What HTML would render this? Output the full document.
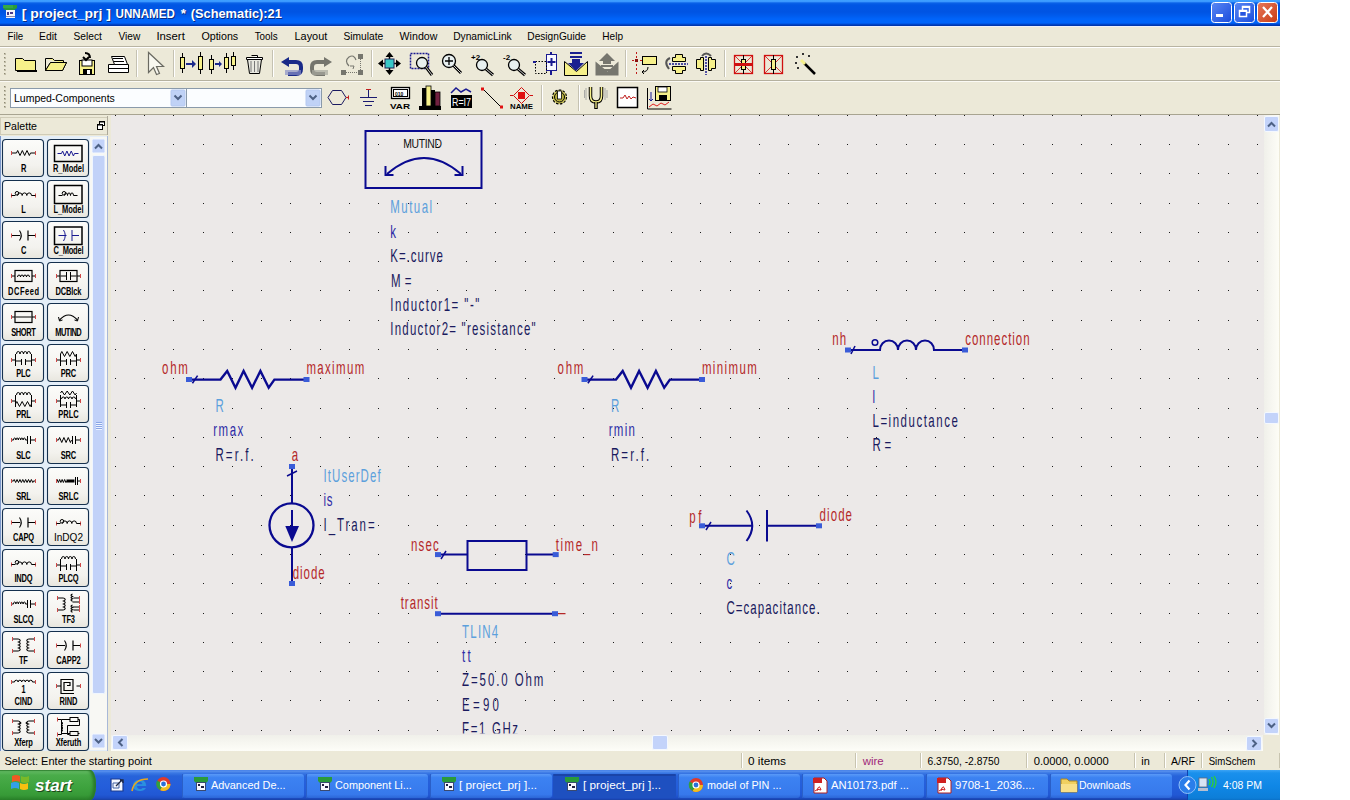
<!DOCTYPE html><html><head><meta charset="utf-8"><title>ADS Schematic</title><style>
html,body{margin:0;padding:0;background:#fff;width:1350px;height:800px;overflow:hidden;font-family:"Liberation Sans",sans-serif;}
.a{position:absolute;}
svg text{font-family:"Liberation Sans",sans-serif;}
</style></head><body>
<div class="a" style="left:0;top:0;width:1280px;height:769px;background:#ECE9D8"></div>
<div class="a" style="left:0;top:0;width:1280px;height:26px;background:linear-gradient(to bottom,#3EA0FF 0px,#3A98FF 1.5px,#0A62E8 3px,#0056E4 5px,#0054E3 12px,#005CEE 16px,#0064FA 19px,#0064FA 23px,#0044C8 24.5px,#0030A0 26px)"></div><div class="a" style="left:0;top:26px;width:1280px;height:1px;background:#EEF0FA"></div>
<div class="a" style="left:0;top:46px;width:1280px;height:1px;background:#B8B4A2"></div>
<div class="a" style="left:0;top:47px;width:1280px;height:1px;background:#FFFFFF"></div>
<div class="a" style="left:0;top:80px;width:1280px;height:1px;background:#B5B19F"></div>
<div class="a" style="left:0;top:81px;width:1280px;height:1px;background:#FBFAF5"></div>
<div class="a" style="left:0;top:114px;width:1280px;height:1px;background:#A8A491"></div>
<div class="a" style="left:111px;top:115px;width:1153px;height:620px;background:#ECE9E8"></div>
<div class="a" style="left:1264px;top:115px;width:15px;height:620px;background:linear-gradient(to right,#F0F0EA,#F8F8F2 60%,#FDFDF6)"></div>
<div class="a" style="left:111px;top:735px;width:1152px;height:16px;background:linear-gradient(to bottom,#F0F0EA,#F8F8F2 60%,#FDFDF8)"></div>
<div class="a" style="left:1264px;top:735px;width:16px;height:16px;background:#ECE9D8"></div>
<div class="a" style="left:0;top:117px;width:106px;height:16px;background:#ECE9D8;border:1px solid #D0CCB8;"></div>
<div class="a" style="left:107px;top:116px;width:1px;height:19px;background:#ACA899"></div>
<div class="a" style="left:0;top:136px;width:108px;height:615px;background:#E4EEF8"></div>
<div class="a" style="left:0;top:136px;width:1px;height:615px;background:#7A96C8"></div>
<div class="a" style="left:107px;top:136px;width:1px;height:615px;background:#A8B8D8"></div>
<div class="a" style="left:0;top:751px;width:1280px;height:19px;background:#ECE9D8"></div>
<div class="a" style="left:0;top:770px;width:1280px;height:30px;background:linear-gradient(to bottom,#3E7AE6 0px,#5A92EE 1px,#3A78E4 3px,#2763DA 6px,#245EDB 16px,#2158D4 25px,#1D4DC4 28px,#1941A5 30px)"></div>
<div class="a" style="left:1187px;top:770px;width:92px;height:30px;background:linear-gradient(to bottom,#3CA4F5 0px,#1A90EC 3px,#0F87E6 16px,#0D7ED8 28px,#0A6BC0 31px);border-left:1px solid #1042AF"></div>
<div class="a" style="left:0;top:770px;width:96px;height:30px;border-radius:0 6px 6px 0 / 0 14px 14px 0;background:linear-gradient(to bottom,#2F7F2F 0px,#62BA62 1.5px,#4AAC4A 5px,#3DA23D 18px,#379A37 25px,#2A822A 30px);box-shadow:inset -3px 0 3px #2A7A2A"></div>

<svg class="a" style="left:0;top:0" width="1350" height="800">
<text x="22.7" y="19" font-size="13" fill="#0A2A80" font-weight="bold" textLength="89.3" lengthAdjust="spacingAndGlyphs" text-anchor="start" style="" >[ project_prj ]</text>
<text x="21.7" y="18" font-size="13" fill="#FFFFFF" font-weight="bold" textLength="89.3" lengthAdjust="spacingAndGlyphs" text-anchor="start" style="" >[ project_prj ]</text>
<text x="116.6" y="19" font-size="13" fill="#0A2A80" font-weight="bold" textLength="59.2" lengthAdjust="spacingAndGlyphs" text-anchor="start" style="" >UNNAMED</text>
<text x="115.6" y="18" font-size="13" fill="#FFFFFF" font-weight="bold" textLength="59.2" lengthAdjust="spacingAndGlyphs" text-anchor="start" style="" >UNNAMED</text>
<text x="181.7" y="19" font-size="13" fill="#0A2A80" font-weight="bold" textLength="5.3" lengthAdjust="spacingAndGlyphs" text-anchor="start" style="" >*</text>
<text x="180.7" y="18" font-size="13" fill="#FFFFFF" font-weight="bold" textLength="5.3" lengthAdjust="spacingAndGlyphs" text-anchor="start" style="" >*</text>
<text x="191.7" y="19" font-size="13" fill="#0A2A80" font-weight="bold" textLength="91.2" lengthAdjust="spacingAndGlyphs" text-anchor="start" style="" >(Schematic):21</text>
<text x="190.7" y="18" font-size="13" fill="#FFFFFF" font-weight="bold" textLength="91.2" lengthAdjust="spacingAndGlyphs" text-anchor="start" style="" >(Schematic):21</text>
<path d="M3 5 h14 v3 l-3 2 h-9 l-2 -2 z" fill="#2A9A3A"/><path d="M4 5 v3 M6 5 v3 M8 5 v3 M10 5 v3 M12 5 v3" stroke="#48C060" stroke-width="0.8"/><rect x="6" y="10" width="9" height="8" fill="#F4F4FA"/><rect x="7" y="12" width="2" height="3" fill="#4A3A8A"/><rect x="10" y="12" width="3" height="2" fill="#4A3A8A"/><rect x="6" y="16" width="9" height="1" fill="#8A8AB0"/>
<defs><linearGradient id="wbmin" x1="0" y1="0" x2="1" y2="1"><stop offset="0" stop-color="#5A88F4"/><stop offset="1" stop-color="#1A4CDC"/></linearGradient></defs>
<rect x="1211.5" y="2.5" width="20" height="20" rx="3" fill="url(#wbmin)" stroke="#FFFFFF" stroke-width="1"/>
<rect x="1216" y="14" width="7" height="3" fill="#fff"/>
<defs><linearGradient id="wbmax" x1="0" y1="0" x2="1" y2="1"><stop offset="0" stop-color="#5A88F4"/><stop offset="1" stop-color="#1A4CDC"/></linearGradient></defs>
<rect x="1234.5" y="2.5" width="20" height="20" rx="3" fill="url(#wbmax)" stroke="#FFFFFF" stroke-width="1"/>
<rect x="1242.5" y="6.5" width="7" height="6" fill="none" stroke="#fff" stroke-width="1.5"/><rect x="1239.5" y="10.5" width="7" height="6" fill="#2454E0" stroke="#fff" stroke-width="1.5"/><rect x="1239" y="10" width="8" height="2" fill="#fff"/><rect x="1242" y="6" width="8" height="2" fill="#fff"/>
<defs><linearGradient id="wbclose" x1="0" y1="0" x2="1" y2="1"><stop offset="0" stop-color="#E8785A"/><stop offset="1" stop-color="#C83C14"/></linearGradient></defs>
<rect x="1257.5" y="2.5" width="20" height="20" rx="3" fill="url(#wbclose)" stroke="#FFFFFF" stroke-width="1"/>
<path d="M1263 7 L1272 17 M1272 7 L1263 17" stroke="#fff" stroke-width="2.2"/>
<text x="7.6" y="40" font-size="11" fill="#000" font-weight="normal" textLength="15.6" lengthAdjust="spacingAndGlyphs" text-anchor="start" style="" >File</text>
<text x="39.1" y="40" font-size="11" fill="#000" font-weight="normal" textLength="17.8" lengthAdjust="spacingAndGlyphs" text-anchor="start" style="" >Edit</text>
<text x="73.5" y="40" font-size="11" fill="#000" font-weight="normal" textLength="28.4" lengthAdjust="spacingAndGlyphs" text-anchor="start" style="" >Select</text>
<text x="118.5" y="40" font-size="11" fill="#000" font-weight="normal" textLength="21.8" lengthAdjust="spacingAndGlyphs" text-anchor="start" style="" >View</text>
<text x="156.4" y="40" font-size="11" fill="#000" font-weight="normal" textLength="28.4" lengthAdjust="spacingAndGlyphs" text-anchor="start" style="" >Insert</text>
<text x="201.4" y="40" font-size="11" fill="#000" font-weight="normal" textLength="36.8" lengthAdjust="spacingAndGlyphs" text-anchor="start" style="" >Options</text>
<text x="254.7" y="40" font-size="11" fill="#000" font-weight="normal" textLength="23" lengthAdjust="spacingAndGlyphs" text-anchor="start" style="" >Tools</text>
<text x="294.5" y="40" font-size="11" fill="#000" font-weight="normal" textLength="32.8" lengthAdjust="spacingAndGlyphs" text-anchor="start" style="" >Layout</text>
<text x="343.4" y="40" font-size="11" fill="#000" font-weight="normal" textLength="39.8" lengthAdjust="spacingAndGlyphs" text-anchor="start" style="" >Simulate</text>
<text x="399.6" y="40" font-size="11" fill="#000" font-weight="normal" textLength="37.8" lengthAdjust="spacingAndGlyphs" text-anchor="start" style="" >Window</text>
<text x="453.2" y="40" font-size="11" fill="#000" font-weight="normal" textLength="58.5" lengthAdjust="spacingAndGlyphs" text-anchor="start" style="" >DynamicLink</text>
<text x="527.3" y="40" font-size="11" fill="#000" font-weight="normal" textLength="58.7" lengthAdjust="spacingAndGlyphs" text-anchor="start" style="" >DesignGuide</text>
<text x="602.3" y="40" font-size="11" fill="#000" font-weight="normal" textLength="20.7" lengthAdjust="spacingAndGlyphs" text-anchor="start" style="" >Help</text>
<rect x="4" y="53" width="2" height="2" fill="#C1BDA8"/><rect x="4" y="53" width="1" height="1" fill="#8C8873"/><rect x="4" y="57" width="2" height="2" fill="#C1BDA8"/><rect x="4" y="57" width="1" height="1" fill="#8C8873"/><rect x="4" y="61" width="2" height="2" fill="#C1BDA8"/><rect x="4" y="61" width="1" height="1" fill="#8C8873"/><rect x="4" y="65" width="2" height="2" fill="#C1BDA8"/><rect x="4" y="65" width="1" height="1" fill="#8C8873"/><rect x="4" y="69" width="2" height="2" fill="#C1BDA8"/><rect x="4" y="69" width="1" height="1" fill="#8C8873"/><rect x="4" y="73" width="2" height="2" fill="#C1BDA8"/><rect x="4" y="73" width="1" height="1" fill="#8C8873"/>
<rect x="4" y="86" width="2" height="2" fill="#C1BDA8"/><rect x="4" y="86" width="1" height="1" fill="#8C8873"/><rect x="4" y="90" width="2" height="2" fill="#C1BDA8"/><rect x="4" y="90" width="1" height="1" fill="#8C8873"/><rect x="4" y="94" width="2" height="2" fill="#C1BDA8"/><rect x="4" y="94" width="1" height="1" fill="#8C8873"/><rect x="4" y="98" width="2" height="2" fill="#C1BDA8"/><rect x="4" y="98" width="1" height="1" fill="#8C8873"/><rect x="4" y="102" width="2" height="2" fill="#C1BDA8"/><rect x="4" y="102" width="1" height="1" fill="#8C8873"/><rect x="4" y="106" width="2" height="2" fill="#C1BDA8"/><rect x="4" y="106" width="1" height="1" fill="#8C8873"/>
<rect x="136" y="50" width="1" height="27" fill="#C5C2B2"/><rect x="137" y="50" width="1" height="27" fill="#FFFFFF"/>
<rect x="173" y="50" width="1" height="27" fill="#C5C2B2"/><rect x="174" y="50" width="1" height="27" fill="#FFFFFF"/>
<rect x="272" y="50" width="1" height="27" fill="#C5C2B2"/><rect x="273" y="50" width="1" height="27" fill="#FFFFFF"/>
<rect x="371" y="50" width="1" height="27" fill="#C5C2B2"/><rect x="372" y="50" width="1" height="27" fill="#FFFFFF"/>
<rect x="625" y="50" width="1" height="27" fill="#C5C2B2"/><rect x="626" y="50" width="1" height="27" fill="#FFFFFF"/>
<rect x="724" y="50" width="1" height="27" fill="#C5C2B2"/><rect x="725" y="50" width="1" height="27" fill="#FFFFFF"/>
<rect x="541" y="85" width="1" height="26" fill="#C5C2B2"/><rect x="542" y="85" width="1" height="26" fill="#FFFFFF"/>
<rect x="578" y="85" width="1" height="26" fill="#C5C2B2"/><rect x="579" y="85" width="1" height="26" fill="#FFFFFF"/>
<path d="M15.5 58.5 h7 l2 2 h11 v10 h-20 z" fill="#F6F08A" stroke="#000"/><rect x="17" y="70" width="20" height="2" fill="#000"/>
<path d="M45.5 58.5 h7 l2 2 h9 v3 M45.5 58.5 v12 h17 l4 -8 h-16 l-5 8" fill="#F6F08A" stroke="#000"/><path d="M50.5 62.5 h16 l-4 8 h-17 z" fill="#F6F08A" stroke="#000"/>
<rect x="79.5" y="60.5" width="15" height="14" fill="#F6F08A" stroke="#000"/><rect x="82" y="60" width="10" height="6" fill="#fff" stroke="#000" stroke-width="1"/><rect x="83" y="69" width="9" height="6" fill="#000"/><rect x="87" y="70" width="3" height="4" fill="#fff"/><path d="M90 58 q0 -5 -5 -5 M83 57 l3 3 l3 -3" stroke="#000" stroke-width="2" fill="none"/>
<path d="M108.5 64.5 h20 v8 h-20 z" fill="#fff" stroke="#000"/><path d="M111.5 56.5 h13 l3 8 h-13 z" fill="#fff" stroke="#000"/><path d="M108.5 68.5 h20" stroke="#000"/><rect x="113" y="58" width="10" height="1" fill="#000"/><rect x="114" y="61" width="10" height="1" fill="#000"/>
<path d="M148.5 52.5 v20 l5 -5 l3 7 l3 -1 l-3 -7 h7 z" fill="#F8F8F0" stroke="#6A6A62" stroke-width="1.2"/>
<path d="M182.5 53 v20" stroke="#000"/><rect x="180.5" y="57.5" width="4" height="11" fill="#F6F08A" stroke="#000"/><path d="M200.5 52 v22" stroke="#000"/><rect x="198.5" y="56.5" width="4" height="13" fill="#F6F08A" stroke="#000"/><path d="M186 63 h6 v-3 l4 4 l-4 4 v-3 h-6 z" fill="#1C2A8C"/>
<path d="M211.5 55 v19" stroke="#000"/><rect x="209.5" y="59.5" width="4" height="10" fill="#F6F08A" stroke="#000"/><path d="M226.5 53 v20" stroke="#000"/><rect x="224.5" y="57.5" width="4" height="11" fill="#F6F08A" stroke="#000"/><path d="M233.5 52 v18" stroke="#000"/><rect x="231.5" y="56.5" width="4" height="9" fill="#F6F08A" stroke="#000"/><path d="M215 63 h4 v-2 l3 3 l-3 3 v-2 h-4 z" fill="#1C2A8C"/>
<path d="M246.5 57.5 h16 v2 h-16 z M251.5 55.5 h6 v2" fill="#fff" stroke="#000"/><path d="M247.5 59.5 l2 14 h10 l2 -14 z" fill="#E8E8E0" stroke="#000"/><path d="M251 61 v11 M254.5 61 v11 M258 61 v11" stroke="#777"/>
<path d="M289 57 l-8 5 l8 5 v-3 h7 q3 0 3 3 v2 q0 3 -3 3 h-8 v4 h8 q7 0 7 -7 v-2 q0 -7 -7 -7 h-7 z" fill="#1A2A88"/><rect x="285" y="70" width="16" height="5" fill="#8A90C8" opacity="0.7"/>
<path d="M324 57 l8 5 l-8 5 v-3 h-7 q-3 0 -3 3 v2 q0 3 3 3 h8 v4 h-8 q-7 0 -7 -7 v-2 q0 -7 7 -7 h7 z" fill="#75756D"/><rect x="312" y="70" width="16" height="5" fill="#A8A8A0" opacity="0.7"/>
<rect x="358" y="54" width="5" height="5" fill="#76766E"/><rect x="341" y="70" width="5" height="5" fill="#76766E"/><rect x="358" y="70" width="5" height="5" fill="#76766E"/><path d="M346 72.5 h12 M360.5 59 v11" stroke="#76766E" stroke-dasharray="1 1"/><path d="M349 66 q-5 -5 0 -9 q5 -3 7 3" stroke="#76766E" fill="none" stroke-width="1.2"/><path d="M350 66 l4 0 l-1 3" stroke="#76766E" fill="none"/>
<path d="M389.5 52 l-4 5 h8 z M389.5 75 l-4 -5 h8 z M378 63.5 l5 -4 v8 z M401 63.5 l-5 -4 v8 z" fill="#000"/><path d="M389.5 56 v15 M382 63.5 h15" stroke="#000" stroke-width="1.5"/><rect x="385" y="59" width="9" height="9" fill="#38C8C8" stroke="#225"/>
<rect x="410.5" y="53.5" width="18" height="15" fill="none" stroke="#1A1A90" stroke-dasharray="2 1" stroke-width="1.5"/><circle cx="422" cy="63" r="5.5" fill="#E8F0F0" stroke="#000" stroke-width="1.3"/><path d="M425.85 66.85 L432 75" stroke="#000" stroke-width="3"/><path d="M425.85 66.85 L432 75" stroke="#D0D0D0" stroke-width="1"/>
<circle cx="449" cy="61" r="6.5" fill="#E8F0F0" stroke="#000" stroke-width="1.3"/><path d="M453.55 65.55 L461 73" stroke="#000" stroke-width="3"/><path d="M453.55 65.55 L461 73" stroke="#D0D0D0" stroke-width="1"/><path d="M449 57 v8 M445 61 h8" stroke="#000" stroke-width="1.3"/>
<circle cx="482" cy="65" r="5.5" fill="#E8F0F0" stroke="#000" stroke-width="1.3"/><path d="M485.85 68.85 L493 75" stroke="#000" stroke-width="3"/><path d="M485.85 68.85 L493 75" stroke="#D0D0D0" stroke-width="1"/><text x="471" y="60" font-size="8" font-weight="bold" fill="#000">+2</text>
<circle cx="514" cy="65" r="5.5" fill="#E8F0F0" stroke="#000" stroke-width="1.3"/><path d="M517.85 68.85 L525 75" stroke="#000" stroke-width="3"/><path d="M517.85 68.85 L525 75" stroke="#D0D0D0" stroke-width="1"/><text x="503" y="60" font-size="8" font-weight="bold" fill="#000">-2</text>
<rect x="546.5" y="54.5" width="10" height="16" fill="#F8F8FF" stroke="#1A1A90"/><path d="M551.5 58 v8 M547.5 62 h8" stroke="#1A1A90" stroke-width="2"/><rect x="535.5" y="61.5" width="11" height="12" fill="none" stroke="#000" stroke-dasharray="1.5 1.5"/><path d="M533 62 h3 M551 52 v2 M551 71 v4" stroke="#1A1A90" stroke-width="2"/>
<path d="M564.5 61.5 l12 10 l11 -10 v14 h-23 z" fill="#F6F08A" stroke="#000"/><path d="M570 52 h12 v2 h-12 z M570 56 h12 v2 h-12 z" fill="#1A2090"/><path d="M572 59 h8 v4 h4 l-8 8 l-8 -8 h4 z" fill="#1A2090"/>
<path d="M595.5 61.5 l12 10 l11 -10 v14 h-23 z" fill="#76766E"/><path d="M599 61 l8 -8 l8 8 h-4 v3 h-8 v-3 z" fill="#76766E"/><path d="M601 65 h12 v2 h-12 z M601 69 h12 v2 h-12 z" fill="#76766E"/>
<rect x="642.5" y="56.5" width="14" height="8" fill="#F6F08A" stroke="#000"/><path d="M636.5 52 v23" stroke="#C01818" stroke-dasharray="2 2"/><path d="M632 60.5 h10" stroke="#C01818" stroke-dasharray="2 2"/><rect x="635" y="59" width="3" height="3" fill="#8A1010"/><path d="M648 67 q0 5 -6 5 l2 -2 M642 72 l2 2" stroke="#000" fill="none"/>
<path d="M675.5 54.5 h7 v3 h3 v4 h-13 v-4 h3 z M675.5 73.5 h7 v-3 h3 v-4 h-13 v4 h3 z" fill="#F6F08A" stroke="#000"/><path d="M669 64 h19" stroke="#1A1A90" stroke-dasharray="2 1" stroke-width="1.5"/><path d="M670 58 q-7 3 -1 11" stroke="#555" stroke-width="2" fill="none"/>
<path d="M696.5 59.5 h4 v-2 h3 v13 h-3 v-2 h-4 z M715.5 59.5 h-4 v-2 h-3 v13 h3 v-2 h4 z" fill="#F6F08A" stroke="#000"/><path d="M706 56 v19" stroke="#1A1A90" stroke-dasharray="2 1" stroke-width="1.5"/><path d="M702 56 q4 -5 9 0" stroke="#555" stroke-width="2" fill="none"/>
<rect x="734.5" y="55.5" width="18" height="18" fill="none" stroke="#D01010" stroke-width="1.3"/><path d="M734 55 L753 74 M753 55 L734 74" stroke="#D01010" stroke-width="0.8"/><path d="M743.5 55 v19" stroke="#000"/><rect x="741.5" y="59.5" width="4" height="10" fill="#F6F08A" stroke="#000"/>
<rect x="734" y="63" width="19" height="3" fill="#D01010"/>
<rect x="764.5" y="55.5" width="18" height="18" fill="none" stroke="#D01010" stroke-width="1.3"/><path d="M764 55 L783 74 M783 55 L764 74" stroke="#D01010" stroke-width="0.8"/><path d="M773.5 55 v19" stroke="#000"/><rect x="771.5" y="59.5" width="4" height="10" fill="#F6F08A" stroke="#000"/>
<path d="M804 63 L815 74" stroke="#000" stroke-width="2.5"/><path d="M801 60 L805 64" stroke="#F6F08A" stroke-width="3"/><path d="M796 57 l1 -1 l1 1 l-1 1 z M802 54 l1 -1 l1 1 l-1 1 z M808 56 l1 -1 l1 1 l-1 1 z M795 63 l1 -1 l1 1 l-1 1 z M797 68 l1 -1 l1 1 l-1 1 z" stroke="#333" fill="none"/>
<rect x="10.5" y="88.5" width="176" height="19" fill="#FBFDFF" stroke="#8A9AAA"/><rect x="171" y="90" width="14" height="16" rx="1" fill="#C0D2F6"/><rect x="171" y="90" width="14" height="16" rx="1" fill="none" stroke="#B4C8F0"/><path d="M174.5 95.5 l3.5 3.5 l3.5 -3.5" stroke="#4D6185" stroke-width="2" fill="none"/><text x="14" y="102" font-size="11" fill="#000" font-weight="normal" textLength="100.8" lengthAdjust="spacingAndGlyphs" text-anchor="start" style="" >Lumped-Components</text>
<rect x="186.5" y="88.5" width="135" height="19" fill="#FBFDFF" stroke="#8A9AAA"/><rect x="306" y="90" width="14" height="16" rx="1" fill="#C0D2F6"/><rect x="306" y="90" width="14" height="16" rx="1" fill="none" stroke="#B4C8F0"/><path d="M309.5 95.5 l3.5 3.5 l3.5 -3.5" stroke="#4D6185" stroke-width="2" fill="none"/>
<path d="M332.5 90.5 h9 l4.5 7 l-4.5 7 h-9 l-4.5 -7 z" fill="none" stroke="#1A1A60" stroke-width="1"/><path d="M346 97.5 h3" stroke="#C02020" stroke-width="1.2"/><path d="M348.5 95.5 v4" stroke="#C02020"/>
<path d="M368.5 89 v8 M360 97.5 h17 M363 101.5 h11 M365 105.5 h7" stroke="#1A1A70" stroke-width="1"/><path d="M366 89.5 h5" stroke="#C02020"/>
<rect x="391.5" y="87.5" width="18" height="11" fill="#fff" stroke="#000" stroke-width="1.3"/><rect x="393.5" y="89.5" width="14" height="7" fill="none" stroke="#000"/><text x="395" y="95.5" font-size="5" font-weight="bold">010</text><text x="390" y="109" font-size="7" font-weight="bold" textLength="20" lengthAdjust="spacingAndGlyphs">VAR</text>
<rect x="419" y="106" width="22" height="4" fill="#000"/><rect x="422" y="88" width="4" height="18" fill="#000"/><rect x="426" y="86" width="5" height="20" fill="#F6F08A" stroke="#000" stroke-width="0.8"/><rect x="431" y="90" width="4" height="16" fill="#000"/><rect x="435" y="92" width="5" height="14" fill="#702040" stroke="#000" stroke-width="0.8"/>
<rect x="451" y="95" width="21" height="13" fill="#000"/><text x="452" y="106" font-size="10" fill="#fff" textLength="19" lengthAdjust="spacingAndGlyphs">R=I7</text><path d="M451 93 l5 -5 l5 4 l5 -3 l5 3" stroke="#1A1A90" stroke-width="1.5" fill="none"/>
<path d="M483.5 89.5 L500.5 106.5" stroke="#000" stroke-width="1"/><rect x="481" y="87.5" width="3" height="3" fill="#E01010"/><rect x="500" y="105.5" width="3" height="3" fill="#E01010"/>
<path d="M521.5 87.5 l8 8 l-8 8 l-8 -8 z" fill="none" stroke="#D01010"/><rect x="518" y="92" width="7" height="7" fill="#E01010"/><path d="M510 95.5 h3 M530 95.5 h3" stroke="#D01010"/><text x="510" y="109" font-size="6.5" font-weight="bold" textLength="23" lengthAdjust="spacingAndGlyphs">NAME</text>
<circle cx="559.5" cy="97" r="7" fill="#D8D060" stroke="#000" stroke-width="1.2" stroke-dasharray="2.5 1.5"/><circle cx="559.5" cy="97" r="5" fill="#B8B040" stroke="#000"/><rect x="557.5" y="91" width="4" height="8" fill="#fff" stroke="#000" stroke-width="0.8"/>
<path d="M590.5 87 v9 q0 6 5.5 6 q5.5 0 5.5 -6 v-9" stroke="#000" stroke-width="3.5" fill="none"/><path d="M590.5 87 v9 q0 6 5.5 6 q5.5 0 5.5 -6 v-9" stroke="#F6F08A" stroke-width="1.5" fill="none"/><path d="M596 102 v7" stroke="#000" stroke-width="3.5"/><path d="M596 102 v6" stroke="#F6F08A" stroke-width="1.3"/><path d="M586 88 v12 M605 88 v12 M584.5 90 v8 M607 90 v8" stroke="#999" stroke-width="0.8"/>
<rect x="617.5" y="87.5" width="20" height="20" fill="#fff" stroke="#000" stroke-width="1.5"/><path d="M620 98 l3 0 l2 -3 l2 4 l2 -3 l2 3 l2 -2 l3 1" stroke="#C02020" fill="none"/>
<rect x="655.5" y="86.5" width="15" height="14" fill="#F6F08A" stroke="#000"/><rect x="658" y="87" width="9" height="5" fill="#fff" stroke="#000" stroke-width="0.8"/><rect x="659" y="95" width="8" height="5" fill="#000"/><path d="M647.5 88 v21 h24" stroke="#000" fill="none"/><path d="M651 92 v9 l-2 -2 M651 101 l2 -2" stroke="#1A1A90" fill="none"/><path d="M649 107 l4 -3 l4 2 l4 -3 l4 2 l4 -3" stroke="#E02020" fill="none"/>
<text x="4" y="130" font-size="11" fill="#000" font-weight="normal" textLength="33" lengthAdjust="spacingAndGlyphs" text-anchor="start" style="" >Palette</text>
<rect x="99.5" y="121.5" width="5" height="4" fill="#fff" stroke="#000"/><rect x="97.5" y="124.5" width="5" height="5" fill="#fff" stroke="#000"/><rect x="100" y="121" width="5" height="1.5" fill="#000"/><rect x="98" y="124" width="5" height="1.5" fill="#000"/>
<rect x="90" y="137" width="17" height="613" fill="#F8F8F4"/>
<rect x="92" y="139" width="13" height="14" rx="1.5" fill="#C3D3FA" stroke="#F4F8FF"/><path d="M95 148.5 l3.5 -3.5 l3.5 3.5" stroke="#4D6185" stroke-width="2" fill="none"/>
<rect x="92.5" y="155.5" width="12.5" height="538" rx="1.5" fill="#C2D2F8" stroke="#F0F6FF"/><path d="M96 422.5 h6 M96 424.5 h6 M96 426.5 h6 M96 428.5 h6" stroke="#8AA6E6"/><path d="M96 423.5 h6 M96 425.5 h6 M96 427.5 h6 M96 429.5 h6" stroke="#EEF4FF"/>
<rect x="92" y="734" width="13" height="14" rx="1.5" fill="#C3D3FA" stroke="#F4F8FF"/><path d="M95 739 l3.5 3.5 l3.5 -3.5" stroke="#4D6185" stroke-width="2" fill="none"/>
<defs><linearGradient id="btng" x1="0" y1="0" x2="0" y2="1"><stop offset="0" stop-color="#FCFCFA"/><stop offset="0.7" stop-color="#F3F2EE"/><stop offset="1" stop-color="#E8E6DE"/></linearGradient></defs>
<rect x="2.5" y="139.5" width="41" height="37" rx="3.5" fill="url(#btng)" stroke="#15304E" stroke-width="1.1"/>
<path d="M11.5 153 h5 M30.5 153 h5" stroke="#000"/><path d="M16.5 153 L17.666666666666668 150.5 L20.0 155.5 L22.333333333333336 150.5 L24.666666666666668 155.5 L27.0 150.5 L29.333333333333336 155.5 L30.5 153" stroke="#000" stroke-width="1" fill="none"/><rect x="11.0" y="151" width="1" height="4" fill="#D04848"/><rect x="35.0" y="151" width="1" height="4" fill="#D04848"/>
<text transform="translate(20.95,172) scale(0.75,1)" x="0" y="0" font-size="10" font-weight="bold" fill="#000" textLength="6.80" lengthAdjust="spacing">R</text>
<rect x="47.5" y="139.5" width="41" height="37" rx="3.5" fill="url(#btng)" stroke="#15304E" stroke-width="1.1"/>
<rect x="54.5" y="145.5" width="27.5" height="16" fill="none" stroke="#000" stroke-width="1.5"/><path d="M57.5 153.5 h4 M74.5 153.5 h4" stroke="#1A1A90"/><path d="M61.5 153.5 L62.583333333333336 151.0 L64.75 156.0 L66.91666666666667 151.0 L69.08333333333333 156.0 L71.25 151.0 L73.41666666666667 156.0 L74.5 153.5" stroke="#1A1A90" stroke-width="1" fill="none"/>
<text transform="translate(53.00,172) scale(0.75,1)" x="0" y="0" font-size="10" font-weight="bold" fill="#000" textLength="41.33" lengthAdjust="spacing">R_Model</text>
<rect x="2.5" y="180.5" width="41" height="37" rx="3.5" fill="url(#btng)" stroke="#15304E" stroke-width="1.1"/>
<rect x="11.0" y="193.5" width="1" height="4" fill="#D04848"/><rect x="35.0" y="193.5" width="1" height="4" fill="#D04848"/><path d="M11.5 195.5 h4 M31.5 195.5 h4" stroke="#000"/><circle cx="17.0" cy="193.3" r="1.8" fill="none" stroke="#000"/><path d="M17.5 195.5 a2.3333333333333335 2.6 0 0 1 4.666666666666667 0 a2.3333333333333335 2.6 0 0 1 4.666666666666667 0 a2.3333333333333335 2.6 0 0 1 4.666666666666667 0" stroke="#000" stroke-width="1" fill="none"/>
<text transform="translate(21.25,213) scale(0.75,1)" x="0" y="0" font-size="10" font-weight="bold" fill="#000" textLength="6.00" lengthAdjust="spacing">L</text>
<rect x="47.5" y="180.5" width="41" height="37" rx="3.5" fill="url(#btng)" stroke="#15304E" stroke-width="1.1"/>
<rect x="54.5" y="185.5" width="27.5" height="18" fill="none" stroke="#000" stroke-width="1.5"/><path d="M58.5 195.5 h4 M73.5 195.5 h4" stroke="#000"/><circle cx="64.0" cy="193.3" r="1.8" fill="none" stroke="#000"/><path d="M64.5 195.5 a1.5 2.6 0 0 1 3.0 0 a1.5 2.6 0 0 1 3.0 0 a1.5 2.6 0 0 1 3.0 0" stroke="#000" stroke-width="1" fill="none"/>
<text transform="translate(53.50,213) scale(0.75,1)" x="0" y="0" font-size="10" font-weight="bold" fill="#000" textLength="40.00" lengthAdjust="spacing">L_Model</text>
<rect x="2.5" y="221.5" width="41" height="37" rx="3.5" fill="url(#btng)" stroke="#15304E" stroke-width="1.1"/>
<path d="M11.5 235.5 h8.5 M28.0 235.5 h8" stroke="#000" stroke-width="1"/><path d="M28.0 230.5 v10" stroke="#000" stroke-width="1.2"/><path d="M19.5 230.5 q3.5 5 0 10" stroke="#000" fill="none" stroke-width="1.1"/><rect x="11.0" y="233.5" width="1" height="4" fill="#D04848"/><rect x="35.0" y="233.5" width="1" height="4" fill="#D04848"/>
<text transform="translate(21.00,254) scale(0.75,1)" x="0" y="0" font-size="10" font-weight="bold" fill="#000" textLength="6.67" lengthAdjust="spacing">C</text>
<rect x="47.5" y="221.5" width="41" height="37" rx="3.5" fill="url(#btng)" stroke="#15304E" stroke-width="1.1"/>
<rect x="54.5" y="227" width="27.5" height="17.5" fill="none" stroke="#000" stroke-width="1.5"/><path d="M58.5 235.5 h8 M72.0 235.5 h7 M72.0 230 v11" stroke="#1A1A90"/><path d="M63.5 230 q3.5 5.5 0 11" stroke="#1A1A90" fill="none"/>
<text transform="translate(53.50,254) scale(0.75,1)" x="0" y="0" font-size="10" font-weight="bold" fill="#000" textLength="40.00" lengthAdjust="spacing">C_Model</text>
<rect x="2.5" y="262.5" width="41" height="37" rx="3.5" fill="url(#btng)" stroke="#15304E" stroke-width="1.1"/>
<rect x="15.0" y="270.5" width="17" height="11" fill="none" stroke="#000" stroke-width="1.2"/><path d="M11.5 276 h3.5 M32.0 276 h3.5" stroke="#000"/><rect x="11.0" y="274" width="1" height="4" fill="#D04848"/><rect x="35.0" y="274" width="1" height="4" fill="#D04848"/><path d="M17.5 277 a1.5 2 0 0 1 3.0 0 a1.5 2 0 0 1 3.0 0 a1.5 2 0 0 1 3.0 0 a1.5 2 0 0 1 3.0 0" stroke="#000" stroke-width="1" fill="none"/>
<text transform="translate(8.00,295) scale(0.75,1)" x="0" y="0" font-size="10" font-weight="bold" fill="#000" textLength="41.33" lengthAdjust="spacing">DCFeed</text>
<rect x="47.5" y="262.5" width="41" height="37" rx="3.5" fill="url(#btng)" stroke="#15304E" stroke-width="1.1"/>
<rect x="60.0" y="270.5" width="17" height="11" fill="none" stroke="#000" stroke-width="1.2"/><path d="M56.5 276 h3.5 M77.0 276 h3.5" stroke="#000"/><rect x="56.0" y="274" width="1" height="4" fill="#D04848"/><rect x="80.0" y="274" width="1" height="4" fill="#D04848"/><path d="M66.5 272 v8 M70.5 272 v8 M60.5 276 h6 M70.5 276 h6" stroke="#000"/>
<text transform="translate(55.50,295) scale(0.75,1)" x="0" y="0" font-size="10" font-weight="bold" fill="#000" textLength="34.67" lengthAdjust="spacing">DCBlck</text>
<rect x="2.5" y="303.5" width="41" height="37" rx="3.5" fill="url(#btng)" stroke="#15304E" stroke-width="1.1"/>
<rect x="15.0" y="311.5" width="17" height="11" fill="none" stroke="#000" stroke-width="1.2"/><path d="M11.5 317 h3.5 M32.0 317 h3.5" stroke="#000"/><rect x="11.0" y="315" width="1" height="4" fill="#D04848"/><rect x="35.0" y="315" width="1" height="4" fill="#D04848"/><path d="M15.5 317 h16" stroke="#000"/>
<text transform="translate(11.25,336) scale(0.75,1)" x="0" y="0" font-size="10" font-weight="bold" fill="#000" textLength="32.67" lengthAdjust="spacing">SHORT</text>
<rect x="47.5" y="303.5" width="41" height="37" rx="3.5" fill="url(#btng)" stroke="#15304E" stroke-width="1.1"/>
<path d="M59.5 320 q9 -10 18 0" stroke="#000" fill="none" stroke-width="1.2"/><path d="M58.5 317 l1 4 l3 -1 M78.5 317 l-1 4 l-3 -1" stroke="#000" fill="none"/>
<text transform="translate(55.20,336) scale(0.75,1)" x="0" y="0" font-size="10" font-weight="bold" fill="#000" textLength="35.47" lengthAdjust="spacing">MUTIND</text>
<rect x="2.5" y="344.5" width="41" height="37" rx="3.5" fill="url(#btng)" stroke="#15304E" stroke-width="1.1"/>
<path d="M11.5 360 h4 M31.5 360 h4 M15.5 354 v12 M31.5 354 v12" stroke="#000"/><rect x="11.0" y="358" width="1" height="4" fill="#D04848"/><rect x="35.0" y="358" width="1" height="4" fill="#D04848"/><path d="M16.5 354 a1.75 2.5 0 0 1 3.5 0 a1.75 2.5 0 0 1 3.5 0 a1.75 2.5 0 0 1 3.5 0 a1.75 2.5 0 0 1 3.5 0" stroke="#000" stroke-width="1" fill="none"/><path d="M15.5 361 h6 M25.5 361 h6 M21.5 359 v6 M25.5 359 v6" stroke="#000"/>
<text transform="translate(16.30,377) scale(0.75,1)" x="0" y="0" font-size="10" font-weight="bold" fill="#000" textLength="19.20" lengthAdjust="spacing">PLC</text>
<rect x="47.5" y="344.5" width="41" height="37" rx="3.5" fill="url(#btng)" stroke="#15304E" stroke-width="1.1"/>
<path d="M56.5 360 h4 M76.5 360 h4 M60.5 354 v12 M76.5 354 v12" stroke="#000"/><rect x="56.0" y="358" width="1" height="4" fill="#D04848"/><rect x="80.0" y="358" width="1" height="4" fill="#D04848"/><path d="M60.5 354 L61.833333333333336 351.5 L64.5 356.5 L67.16666666666667 351.5 L69.83333333333333 356.5 L72.5 351.5 L75.16666666666667 356.5 L76.5 354" stroke="#000" stroke-width="1" fill="none"/><path d="M60.5 361 h6 M70.5 361 h6 M66.5 359 v6 M70.5 359 v6" stroke="#000"/>
<text transform="translate(60.80,377) scale(0.75,1)" x="0" y="0" font-size="10" font-weight="bold" fill="#000" textLength="20.52" lengthAdjust="spacing">PRC</text>
<rect x="2.5" y="385.5" width="41" height="37" rx="3.5" fill="url(#btng)" stroke="#15304E" stroke-width="1.1"/>
<path d="M11.5 401 h4 M31.5 401 h4 M15.5 395 v12 M31.5 395 v12" stroke="#000"/><rect x="11.0" y="399" width="1" height="4" fill="#D04848"/><rect x="35.0" y="399" width="1" height="4" fill="#D04848"/><path d="M16.5 395 a1.75 2.5 0 0 1 3.5 0 a1.75 2.5 0 0 1 3.5 0 a1.75 2.5 0 0 1 3.5 0 a1.75 2.5 0 0 1 3.5 0" stroke="#000" stroke-width="1" fill="none"/><path d="M15.5 404 L16.833333333333332 401.5 L19.5 406.5 L22.166666666666664 401.5 L24.833333333333332 406.5 L27.5 401.5 L30.166666666666664 406.5 L31.5 404" stroke="#000" stroke-width="1" fill="none"/>
<text transform="translate(16.21,418) scale(0.75,1)" x="0" y="0" font-size="10" font-weight="bold" fill="#000" textLength="19.44" lengthAdjust="spacing">PRL</text>
<rect x="47.5" y="385.5" width="41" height="37" rx="3.5" fill="url(#btng)" stroke="#15304E" stroke-width="1.1"/>
<path d="M56.5 401 h4 M76.5 401 h4 M60.5 395 v12 M76.5 395 v12" stroke="#000"/><rect x="56.0" y="399" width="1" height="4" fill="#D04848"/><rect x="80.0" y="399" width="1" height="4" fill="#D04848"/><path d="M60.5 393 L61.833333333333336 391 L64.5 395 L67.16666666666667 391 L69.83333333333333 395 L72.5 391 L75.16666666666667 395 L76.5 393" stroke="#000" stroke-width="1" fill="none"/><path d="M61.5 399 a1.75 2 0 0 1 3.5 0 a1.75 2 0 0 1 3.5 0 a1.75 2 0 0 1 3.5 0 a1.75 2 0 0 1 3.5 0" stroke="#000" stroke-width="1" fill="none"/><path d="M60.5 405 h6 M70.5 405 h6 M66.5 402 v6 M70.5 402 v6" stroke="#000"/>
<text transform="translate(58.25,418) scale(0.75,1)" x="0" y="0" font-size="10" font-weight="bold" fill="#000" textLength="27.33" lengthAdjust="spacing">PRLC</text>
<rect x="2.5" y="426.5" width="41" height="37" rx="3.5" fill="url(#btng)" stroke="#15304E" stroke-width="1.1"/>
<path d="M11.5 440 h2" stroke="#000"/><path d="M13.5 440 a1.2 2 0 0 1 2.4 0 a1.2 2 0 0 1 2.4 0 a1.2 2 0 0 1 2.4 0 a1.2 2 0 0 1 2.4 0 a1.2 2 0 0 1 2.4 0" stroke="#000" stroke-width="1" fill="none"/><path d="M25.5 440 h2 M27.5 436 v8 M30.5 436 v8 M30.5 440 h5" stroke="#000"/><rect x="11.0" y="438" width="1" height="4" fill="#D04848"/><rect x="35.0" y="438" width="1" height="4" fill="#D04848"/>
<text transform="translate(16.21,459) scale(0.75,1)" x="0" y="0" font-size="10" font-weight="bold" fill="#000" textLength="19.44" lengthAdjust="spacing">SLC</text>
<rect x="47.5" y="426.5" width="41" height="37" rx="3.5" fill="url(#btng)" stroke="#15304E" stroke-width="1.1"/>
<path d="M56.5 440 h2" stroke="#000"/><path d="M58.5 440 L59.583333333333336 437.5 L61.75 442.5 L63.916666666666664 437.5 L66.08333333333333 442.5 L68.25 437.5 L70.41666666666667 442.5 L71.5 440" stroke="#000" stroke-width="1" fill="none"/><path d="M72.5 436 v8 M75.5 436 v8 M75.5 440 h5" stroke="#000"/><rect x="56.0" y="438" width="1" height="4" fill="#D04848"/><rect x="80.0" y="438" width="1" height="4" fill="#D04848"/>
<text transform="translate(60.80,459) scale(0.75,1)" x="0" y="0" font-size="10" font-weight="bold" fill="#000" textLength="20.52" lengthAdjust="spacing">SRC</text>
<rect x="2.5" y="467.5" width="41" height="37" rx="3.5" fill="url(#btng)" stroke="#15304E" stroke-width="1.1"/>
<path d="M11.5 481 h2 M33.5 481 h2" stroke="#000"/><path d="M13.5 481 L14.214285714285714 479.5 L15.642857142857142 482.5 L17.071428571428573 479.5 L18.5 482.5 L19.92857142857143 479.5 L21.357142857142858 482.5 L22.785714285714285 479.5 L24.214285714285715 482.5 L25.642857142857142 479.5 L27.07142857142857 482.5 L28.5 479.5 L29.92857142857143 482.5 L31.357142857142858 479.5 L32.785714285714285 482.5 L33.5 481" stroke="#000" stroke-width="1" fill="none"/><rect x="11.0" y="479" width="1" height="4" fill="#D04848"/><rect x="35.0" y="479" width="1" height="4" fill="#D04848"/>
<text transform="translate(16.21,500) scale(0.75,1)" x="0" y="0" font-size="10" font-weight="bold" fill="#000" textLength="19.44" lengthAdjust="spacing">SRL</text>
<rect x="47.5" y="467.5" width="41" height="37" rx="3.5" fill="url(#btng)" stroke="#15304E" stroke-width="1.1"/>
<path d="M56.5 481 L57.125 479.5 L58.375 482.5 L59.625 479.5 L60.875 482.5 L62.125 479.5 L63.375 482.5 L64.625 479.5 L65.875 482.5 L66.5 481" stroke="#000" stroke-width="1" fill="none"/><rect x="66.5" y="479.5" width="8" height="3" fill="#000"/><path d="M75.5 477 v8 M77.5 477 v8 M77.5 481 h3" stroke="#000"/><rect x="56.0" y="479" width="1" height="4" fill="#D04848"/><rect x="80.0" y="479" width="1" height="4" fill="#D04848"/>
<text transform="translate(58.40,500) scale(0.75,1)" x="0" y="0" font-size="10" font-weight="bold" fill="#000" textLength="26.93" lengthAdjust="spacing">SRLC</text>
<rect x="2.5" y="508.5" width="41" height="37" rx="3.5" fill="url(#btng)" stroke="#15304E" stroke-width="1.1"/>
<path d="M11.5 522.5 h8.5 M28.0 522.5 h8" stroke="#000" stroke-width="1"/><path d="M28.0 517.5 v10" stroke="#000" stroke-width="1.2"/><path d="M19.5 517.5 q3.5 5 0 10" stroke="#000" fill="none" stroke-width="1.1"/><rect x="11.0" y="520.5" width="1" height="4" fill="#D04848"/><rect x="35.0" y="520.5" width="1" height="4" fill="#D04848"/>
<text transform="translate(13.00,541) scale(0.75,1)" x="0" y="0" font-size="10" font-weight="bold" fill="#000" textLength="28.00" lengthAdjust="spacing">CAPQ</text>
<rect x="47.5" y="508.5" width="41" height="37" rx="3.5" fill="url(#btng)" stroke="#15304E" stroke-width="1.1"/>
<rect x="56.0" y="521.5" width="1" height="4" fill="#D04848"/><rect x="80.0" y="521.5" width="1" height="4" fill="#D04848"/><path d="M56.5 523.5 h4 M76.5 523.5 h4" stroke="#000"/><circle cx="62.0" cy="521.3" r="1.8" fill="none" stroke="#000"/><path d="M62.5 523.5 a2.3333333333333335 2.6 0 0 1 4.666666666666667 0 a2.3333333333333335 2.6 0 0 1 4.666666666666667 0 a2.3333333333333335 2.6 0 0 1 4.666666666666667 0" stroke="#000" stroke-width="1" fill="none"/>
<text x="68.5" y="541" font-size="11" fill="#000" font-weight="normal" textLength="29" lengthAdjust="spacingAndGlyphs" text-anchor="middle" style="" >InDQ2</text>
<rect x="2.5" y="549.5" width="41" height="37" rx="3.5" fill="url(#btng)" stroke="#15304E" stroke-width="1.1"/>
<rect x="11.0" y="562.5" width="1" height="4" fill="#D04848"/><rect x="35.0" y="562.5" width="1" height="4" fill="#D04848"/><path d="M11.5 564.5 h4 M31.5 564.5 h4" stroke="#000"/><circle cx="17.0" cy="562.3" r="1.8" fill="none" stroke="#000"/><path d="M17.5 564.5 a2.3333333333333335 2.6 0 0 1 4.666666666666667 0 a2.3333333333333335 2.6 0 0 1 4.666666666666667 0 a2.3333333333333335 2.6 0 0 1 4.666666666666667 0" stroke="#000" stroke-width="1" fill="none"/>
<text transform="translate(14.39,582) scale(0.75,1)" x="0" y="0" font-size="10" font-weight="bold" fill="#000" textLength="24.30" lengthAdjust="spacing">INDQ</text>
<rect x="47.5" y="549.5" width="41" height="37" rx="3.5" fill="url(#btng)" stroke="#15304E" stroke-width="1.1"/>
<path d="M56.5 565 h4 M76.5 565 h4 M60.5 559 v12 M76.5 559 v12" stroke="#000"/><rect x="56.0" y="563" width="1" height="4" fill="#D04848"/><rect x="80.0" y="563" width="1" height="4" fill="#D04848"/><path d="M61.5 559 a1.75 2.5 0 0 1 3.5 0 a1.75 2.5 0 0 1 3.5 0 a1.75 2.5 0 0 1 3.5 0 a1.75 2.5 0 0 1 3.5 0" stroke="#000" stroke-width="1" fill="none"/><path d="M60.5 566 h6 M70.5 566 h6 M66.5 564 v6 M70.5 564 v6" stroke="#000"/>
<text transform="translate(58.38,582) scale(0.75,1)" x="0" y="0" font-size="10" font-weight="bold" fill="#000" textLength="27.00" lengthAdjust="spacing">PLCQ</text>
<rect x="2.5" y="590.5" width="41" height="37" rx="3.5" fill="url(#btng)" stroke="#15304E" stroke-width="1.1"/>
<path d="M11.5 604 h2" stroke="#000"/><path d="M13.5 604 a1.2 2 0 0 1 2.4 0 a1.2 2 0 0 1 2.4 0 a1.2 2 0 0 1 2.4 0 a1.2 2 0 0 1 2.4 0 a1.2 2 0 0 1 2.4 0" stroke="#000" stroke-width="1" fill="none"/><path d="M25.5 604 h2 M27.5 600 v8 M30.5 600 v8 M30.5 604 h5" stroke="#000"/><rect x="11.0" y="602" width="1" height="4" fill="#D04848"/><rect x="35.0" y="602" width="1" height="4" fill="#D04848"/>
<text transform="translate(13.38,623) scale(0.75,1)" x="0" y="0" font-size="10" font-weight="bold" fill="#000" textLength="27.00" lengthAdjust="spacing">SLCQ</text>
<rect x="47.5" y="590.5" width="41" height="37" rx="3.5" fill="url(#btng)" stroke="#15304E" stroke-width="1.1"/>
<path d="M57.5 598 h6 M57.5 610 h6 M73.5 598 h6 M73.5 610 h6" stroke="#000"/><path d="M63.5 598 q3.5 1.5 0 3 q3.5 1.5 0 3 q3.5 1.5 0 3 q3.5 1.5 0 3" stroke="#000" fill="none" stroke-width="1.1"/><path d="M72.5 594 q-3 1.2 0 2.4 q-3 1.2 0 2.4 q-3 1.2 0 2.4 M72.5 605 q-3 1.2 0 2.4 q-3 1.2 0 2.4 q-3 1.2 0 2.4" stroke="#000" fill="none" stroke-width="1.1"/><path d="M72.5 602 h7 M72.5 607 h7" stroke="#000"/><rect x="79.0" y="600" width="1" height="4" fill="#D04848"/><rect x="79.0" y="605" width="1" height="4" fill="#D04848"/><rect x="57.0" y="596" width="1" height="4" fill="#D04848"/><rect x="57.0" y="608" width="1" height="4" fill="#D04848"/><rect x="79.0" y="596" width="1" height="4" fill="#D04848"/><rect x="79.0" y="608" width="1" height="4" fill="#D04848"/>
<text transform="translate(62.02,623) scale(0.75,1)" x="0" y="0" font-size="10" font-weight="bold" fill="#000" textLength="17.28" lengthAdjust="spacing">TF3</text>
<rect x="2.5" y="631.5" width="41" height="37" rx="3.5" fill="url(#btng)" stroke="#15304E" stroke-width="1.1"/>
<path d="M12.5 639 h6 M12.5 651 h6 M28.5 639 h6 M28.5 651 h6" stroke="#000"/><path d="M18.5 639 q3.5 1.5 0 3 q3.5 1.5 0 3 q3.5 1.5 0 3 q3.5 1.5 0 3" stroke="#000" fill="none" stroke-width="1.1"/><path d="M28.5 639 q-3.5 1.5 0 3 q-3.5 1.5 0 3 q-3.5 1.5 0 3 q-3.5 1.5 0 3" stroke="#000" fill="none" stroke-width="1.1"/><rect x="12.0" y="637" width="1" height="4" fill="#D04848"/><rect x="12.0" y="649" width="1" height="4" fill="#D04848"/><rect x="34.0" y="637" width="1" height="4" fill="#D04848"/><rect x="34.0" y="649" width="1" height="4" fill="#D04848"/>
<text transform="translate(19.05,664) scale(0.75,1)" x="0" y="0" font-size="10" font-weight="bold" fill="#000" textLength="11.88" lengthAdjust="spacing">TF</text>
<rect x="47.5" y="631.5" width="41" height="37" rx="3.5" fill="url(#btng)" stroke="#15304E" stroke-width="1.1"/>
<path d="M56.5 645.5 h8.5 M73.0 645.5 h8" stroke="#000" stroke-width="1"/><path d="M73.0 640.5 v10" stroke="#000" stroke-width="1.2"/><path d="M64.5 640.5 q3.5 5 0 10" stroke="#000" fill="none" stroke-width="1.1"/><rect x="56.0" y="643.5" width="1" height="4" fill="#D04848"/><rect x="80.0" y="643.5" width="1" height="4" fill="#D04848"/>
<text transform="translate(56.35,664) scale(0.75,1)" x="0" y="0" font-size="10" font-weight="bold" fill="#000" textLength="32.40" lengthAdjust="spacing">CAPP2</text>
<rect x="2.5" y="672.5" width="41" height="37" rx="3.5" fill="url(#btng)" stroke="#15304E" stroke-width="1.1"/>
<path d="M14.5 682 a1.8 1.8 0 0 1 3.6 0 a1.8 1.8 0 0 1 3.6 0 a1.8 1.8 0 0 1 3.6 0 a1.8 1.8 0 0 1 3.6 0 a1.8 1.8 0 0 1 3.6 0" stroke="#000" stroke-width="1" fill="none"/><path d="M11.5 682 h3 M32.5 682 h3" stroke="#000"/><text x="23.5" y="693" font-size="10" text-anchor="middle" font-weight="bold" textLength="4" lengthAdjust="spacingAndGlyphs">1</text><rect x="11.0" y="680" width="1" height="4" fill="#D04848"/><rect x="35.0" y="680" width="1" height="4" fill="#D04848"/>
<text transform="translate(14.59,705) scale(0.75,1)" x="0" y="0" font-size="10" font-weight="bold" fill="#000" textLength="23.76" lengthAdjust="spacing">CIND</text>
<rect x="47.5" y="672.5" width="41" height="37" rx="3.5" fill="url(#btng)" stroke="#15304E" stroke-width="1.1"/>
<path d="M67.0 685.5 h3 v-3 h-6 v8 h9 v-11 h-12 v14 h13" fill="none" stroke="#000" stroke-width="1.2"/><path d="M56.5 686 h4.5 M76.5 686 h4" stroke="#000"/><rect x="56.0" y="684" width="1" height="4" fill="#D04848"/><rect x="80.0" y="684" width="1" height="4" fill="#D04848"/>
<text transform="translate(59.59,705) scale(0.75,1)" x="0" y="0" font-size="10" font-weight="bold" fill="#000" textLength="23.76" lengthAdjust="spacing">RIND</text>
<rect x="2.5" y="713.5" width="41" height="37" rx="3.5" fill="url(#btng)" stroke="#15304E" stroke-width="1.1"/>
<path d="M12.5 721 h6 M12.5 733 h6 M28.5 721 h6 M28.5 733 h6" stroke="#000"/><path d="M18.5 721 q3.5 1.5 0 3 q3.5 1.5 0 3 q3.5 1.5 0 3 q3.5 1.5 0 3" stroke="#000" fill="none" stroke-width="1.1"/><path d="M28.5 721 q-3.5 1.5 0 3 q-3.5 1.5 0 3 q-3.5 1.5 0 3 q-3.5 1.5 0 3" stroke="#000" fill="none" stroke-width="1.1"/><circle cx="20.5" cy="723" r="0.9" fill="#000"/><circle cx="26.5" cy="723" r="0.9" fill="#000"/><rect x="12.0" y="719" width="1" height="4" fill="#D04848"/><rect x="12.0" y="731" width="1" height="4" fill="#D04848"/><rect x="34.0" y="719" width="1" height="4" fill="#D04848"/><rect x="34.0" y="731" width="1" height="4" fill="#D04848"/>
<text transform="translate(14.18,746) scale(0.75,1)" x="0" y="0" font-size="10" font-weight="bold" fill="#000" textLength="24.84" lengthAdjust="spacing">Xferp</text>
<rect x="47.5" y="713.5" width="41" height="37" rx="3.5" fill="url(#btng)" stroke="#15304E" stroke-width="1.1"/>
<rect x="70.0" y="717.5" width="8" height="4" fill="none" stroke="#000"/><rect x="70.0" y="731.5" width="8" height="4" fill="none" stroke="#000"/><path d="M57.5 719.5 h4 v15 h-4 M61.5 719.5 h8.5 M78.0 719.5 h1.5 v6 h-12 v9 h2 M61.5 733.5 h8.5 M78.0 733.5 h1.5" stroke="#000" fill="none"/><path d="M61.5 722 q3 1.2 0 2.4 q3 1.2 0 2.4 q3 1.2 0 2.4 q3 1.2 0 2.4" stroke="#000" fill="none"/><rect x="57.0" y="717.5" width="1" height="4" fill="#D04848"/><rect x="57.0" y="732.5" width="1" height="4" fill="#D04848"/>
<text transform="translate(55.74,746) scale(0.75,1)" x="0" y="0" font-size="10" font-weight="bold" fill="#000" textLength="34.02" lengthAdjust="spacing">Xferuth</text>
<rect x="1264.5" y="116.5" width="14" height="15" rx="1.5" fill="#C3D3FA" stroke="#F4F8FF"/><path d="M1268 126.5 l3.5 -3.5 l3.5 3.5" stroke="#4D6185" stroke-width="2" fill="none"/>
<rect x="1264.5" y="718.5" width="14" height="15" rx="1.5" fill="#C3D3FA" stroke="#F4F8FF"/><path d="M1268 723.5 l3.5 3.5 l3.5 -3.5" stroke="#4D6185" stroke-width="2" fill="none"/>
<rect x="1264.5" y="412.5" width="14" height="11" rx="1.5" fill="#C3D3FA" stroke="#F4F8FF"/>
<rect x="112.5" y="735.5" width="15" height="14" rx="1.5" fill="#C3D3FA" stroke="#F4F8FF"/><path d="M122.5 739 l-3.5 3.5 l3.5 3.5" stroke="#4D6185" stroke-width="2" fill="none"/>
<rect x="1246.5" y="736.5" width="15" height="14" rx="1.5" fill="#C3D3FA" stroke="#F4F8FF"/><path d="M1252.5 740 l3.5 3.5 l-3.5 3.5" stroke="#4D6185" stroke-width="2" fill="none"/>
<rect x="652.5" y="735.5" width="15" height="14" rx="1.5" fill="#C3D3FA" stroke="#F4F8FF"/>
<path d="M115 115h1v1h-1zM115 144h1v1h-1zM115 173h1v1h-1zM115 203h1v1h-1zM115 232h1v1h-1zM115 261h1v1h-1zM115 290h1v1h-1zM115 320h1v1h-1zM115 349h1v1h-1zM115 378h1v1h-1zM115 408h1v1h-1zM115 437h1v1h-1zM115 466h1v1h-1zM115 495h1v1h-1zM115 525h1v1h-1zM115 554h1v1h-1zM115 583h1v1h-1zM115 613h1v1h-1zM115 642h1v1h-1zM115 671h1v1h-1zM115 700h1v1h-1zM115 730h1v1h-1zM144 115h1v1h-1zM144 144h1v1h-1zM144 173h1v1h-1zM144 203h1v1h-1zM144 232h1v1h-1zM144 261h1v1h-1zM144 290h1v1h-1zM144 320h1v1h-1zM144 349h1v1h-1zM144 378h1v1h-1zM144 408h1v1h-1zM144 437h1v1h-1zM144 466h1v1h-1zM144 495h1v1h-1zM144 525h1v1h-1zM144 554h1v1h-1zM144 583h1v1h-1zM144 613h1v1h-1zM144 642h1v1h-1zM144 671h1v1h-1zM144 700h1v1h-1zM144 730h1v1h-1zM173 115h1v1h-1zM173 144h1v1h-1zM173 173h1v1h-1zM173 203h1v1h-1zM173 232h1v1h-1zM173 261h1v1h-1zM173 290h1v1h-1zM173 320h1v1h-1zM173 349h1v1h-1zM173 378h1v1h-1zM173 408h1v1h-1zM173 437h1v1h-1zM173 466h1v1h-1zM173 495h1v1h-1zM173 525h1v1h-1zM173 554h1v1h-1zM173 583h1v1h-1zM173 613h1v1h-1zM173 642h1v1h-1zM173 671h1v1h-1zM173 700h1v1h-1zM173 730h1v1h-1zM203 115h1v1h-1zM203 144h1v1h-1zM203 173h1v1h-1zM203 203h1v1h-1zM203 232h1v1h-1zM203 261h1v1h-1zM203 290h1v1h-1zM203 320h1v1h-1zM203 349h1v1h-1zM203 378h1v1h-1zM203 408h1v1h-1zM203 437h1v1h-1zM203 466h1v1h-1zM203 495h1v1h-1zM203 525h1v1h-1zM203 554h1v1h-1zM203 583h1v1h-1zM203 613h1v1h-1zM203 642h1v1h-1zM203 671h1v1h-1zM203 700h1v1h-1zM203 730h1v1h-1zM232 115h1v1h-1zM232 144h1v1h-1zM232 173h1v1h-1zM232 203h1v1h-1zM232 232h1v1h-1zM232 261h1v1h-1zM232 290h1v1h-1zM232 320h1v1h-1zM232 349h1v1h-1zM232 378h1v1h-1zM232 408h1v1h-1zM232 437h1v1h-1zM232 466h1v1h-1zM232 495h1v1h-1zM232 525h1v1h-1zM232 554h1v1h-1zM232 583h1v1h-1zM232 613h1v1h-1zM232 642h1v1h-1zM232 671h1v1h-1zM232 700h1v1h-1zM232 730h1v1h-1zM261 115h1v1h-1zM261 144h1v1h-1zM261 173h1v1h-1zM261 203h1v1h-1zM261 232h1v1h-1zM261 261h1v1h-1zM261 290h1v1h-1zM261 320h1v1h-1zM261 349h1v1h-1zM261 378h1v1h-1zM261 408h1v1h-1zM261 437h1v1h-1zM261 466h1v1h-1zM261 495h1v1h-1zM261 525h1v1h-1zM261 554h1v1h-1zM261 583h1v1h-1zM261 613h1v1h-1zM261 642h1v1h-1zM261 671h1v1h-1zM261 700h1v1h-1zM261 730h1v1h-1zM290 115h1v1h-1zM290 144h1v1h-1zM290 173h1v1h-1zM290 203h1v1h-1zM290 232h1v1h-1zM290 261h1v1h-1zM290 290h1v1h-1zM290 320h1v1h-1zM290 349h1v1h-1zM290 378h1v1h-1zM290 408h1v1h-1zM290 437h1v1h-1zM290 466h1v1h-1zM290 495h1v1h-1zM290 525h1v1h-1zM290 554h1v1h-1zM290 583h1v1h-1zM290 613h1v1h-1zM290 642h1v1h-1zM290 671h1v1h-1zM290 700h1v1h-1zM290 730h1v1h-1zM320 115h1v1h-1zM320 144h1v1h-1zM320 173h1v1h-1zM320 203h1v1h-1zM320 232h1v1h-1zM320 261h1v1h-1zM320 290h1v1h-1zM320 320h1v1h-1zM320 349h1v1h-1zM320 378h1v1h-1zM320 408h1v1h-1zM320 437h1v1h-1zM320 466h1v1h-1zM320 495h1v1h-1zM320 525h1v1h-1zM320 554h1v1h-1zM320 583h1v1h-1zM320 613h1v1h-1zM320 642h1v1h-1zM320 671h1v1h-1zM320 700h1v1h-1zM320 730h1v1h-1zM349 115h1v1h-1zM349 144h1v1h-1zM349 173h1v1h-1zM349 203h1v1h-1zM349 232h1v1h-1zM349 261h1v1h-1zM349 290h1v1h-1zM349 320h1v1h-1zM349 349h1v1h-1zM349 378h1v1h-1zM349 408h1v1h-1zM349 437h1v1h-1zM349 466h1v1h-1zM349 495h1v1h-1zM349 525h1v1h-1zM349 554h1v1h-1zM349 583h1v1h-1zM349 613h1v1h-1zM349 642h1v1h-1zM349 671h1v1h-1zM349 700h1v1h-1zM349 730h1v1h-1zM378 115h1v1h-1zM378 144h1v1h-1zM378 173h1v1h-1zM378 203h1v1h-1zM378 232h1v1h-1zM378 261h1v1h-1zM378 290h1v1h-1zM378 320h1v1h-1zM378 349h1v1h-1zM378 378h1v1h-1zM378 408h1v1h-1zM378 437h1v1h-1zM378 466h1v1h-1zM378 495h1v1h-1zM378 525h1v1h-1zM378 554h1v1h-1zM378 583h1v1h-1zM378 613h1v1h-1zM378 642h1v1h-1zM378 671h1v1h-1zM378 700h1v1h-1zM378 730h1v1h-1zM408 115h1v1h-1zM408 144h1v1h-1zM408 173h1v1h-1zM408 203h1v1h-1zM408 232h1v1h-1zM408 261h1v1h-1zM408 290h1v1h-1zM408 320h1v1h-1zM408 349h1v1h-1zM408 378h1v1h-1zM408 408h1v1h-1zM408 437h1v1h-1zM408 466h1v1h-1zM408 495h1v1h-1zM408 525h1v1h-1zM408 554h1v1h-1zM408 583h1v1h-1zM408 613h1v1h-1zM408 642h1v1h-1zM408 671h1v1h-1zM408 700h1v1h-1zM408 730h1v1h-1zM437 115h1v1h-1zM437 144h1v1h-1zM437 173h1v1h-1zM437 203h1v1h-1zM437 232h1v1h-1zM437 261h1v1h-1zM437 290h1v1h-1zM437 320h1v1h-1zM437 349h1v1h-1zM437 378h1v1h-1zM437 408h1v1h-1zM437 437h1v1h-1zM437 466h1v1h-1zM437 495h1v1h-1zM437 525h1v1h-1zM437 554h1v1h-1zM437 583h1v1h-1zM437 613h1v1h-1zM437 642h1v1h-1zM437 671h1v1h-1zM437 700h1v1h-1zM437 730h1v1h-1zM466 115h1v1h-1zM466 144h1v1h-1zM466 173h1v1h-1zM466 203h1v1h-1zM466 232h1v1h-1zM466 261h1v1h-1zM466 290h1v1h-1zM466 320h1v1h-1zM466 349h1v1h-1zM466 378h1v1h-1zM466 408h1v1h-1zM466 437h1v1h-1zM466 466h1v1h-1zM466 495h1v1h-1zM466 525h1v1h-1zM466 554h1v1h-1zM466 583h1v1h-1zM466 613h1v1h-1zM466 642h1v1h-1zM466 671h1v1h-1zM466 700h1v1h-1zM466 730h1v1h-1zM495 115h1v1h-1zM495 144h1v1h-1zM495 173h1v1h-1zM495 203h1v1h-1zM495 232h1v1h-1zM495 261h1v1h-1zM495 290h1v1h-1zM495 320h1v1h-1zM495 349h1v1h-1zM495 378h1v1h-1zM495 408h1v1h-1zM495 437h1v1h-1zM495 466h1v1h-1zM495 495h1v1h-1zM495 525h1v1h-1zM495 554h1v1h-1zM495 583h1v1h-1zM495 613h1v1h-1zM495 642h1v1h-1zM495 671h1v1h-1zM495 700h1v1h-1zM495 730h1v1h-1zM525 115h1v1h-1zM525 144h1v1h-1zM525 173h1v1h-1zM525 203h1v1h-1zM525 232h1v1h-1zM525 261h1v1h-1zM525 290h1v1h-1zM525 320h1v1h-1zM525 349h1v1h-1zM525 378h1v1h-1zM525 408h1v1h-1zM525 437h1v1h-1zM525 466h1v1h-1zM525 495h1v1h-1zM525 525h1v1h-1zM525 554h1v1h-1zM525 583h1v1h-1zM525 613h1v1h-1zM525 642h1v1h-1zM525 671h1v1h-1zM525 700h1v1h-1zM525 730h1v1h-1zM554 115h1v1h-1zM554 144h1v1h-1zM554 173h1v1h-1zM554 203h1v1h-1zM554 232h1v1h-1zM554 261h1v1h-1zM554 290h1v1h-1zM554 320h1v1h-1zM554 349h1v1h-1zM554 378h1v1h-1zM554 408h1v1h-1zM554 437h1v1h-1zM554 466h1v1h-1zM554 495h1v1h-1zM554 525h1v1h-1zM554 554h1v1h-1zM554 583h1v1h-1zM554 613h1v1h-1zM554 642h1v1h-1zM554 671h1v1h-1zM554 700h1v1h-1zM554 730h1v1h-1zM583 115h1v1h-1zM583 144h1v1h-1zM583 173h1v1h-1zM583 203h1v1h-1zM583 232h1v1h-1zM583 261h1v1h-1zM583 290h1v1h-1zM583 320h1v1h-1zM583 349h1v1h-1zM583 378h1v1h-1zM583 408h1v1h-1zM583 437h1v1h-1zM583 466h1v1h-1zM583 495h1v1h-1zM583 525h1v1h-1zM583 554h1v1h-1zM583 583h1v1h-1zM583 613h1v1h-1zM583 642h1v1h-1zM583 671h1v1h-1zM583 700h1v1h-1zM583 730h1v1h-1zM613 115h1v1h-1zM613 144h1v1h-1zM613 173h1v1h-1zM613 203h1v1h-1zM613 232h1v1h-1zM613 261h1v1h-1zM613 290h1v1h-1zM613 320h1v1h-1zM613 349h1v1h-1zM613 378h1v1h-1zM613 408h1v1h-1zM613 437h1v1h-1zM613 466h1v1h-1zM613 495h1v1h-1zM613 525h1v1h-1zM613 554h1v1h-1zM613 583h1v1h-1zM613 613h1v1h-1zM613 642h1v1h-1zM613 671h1v1h-1zM613 700h1v1h-1zM613 730h1v1h-1zM642 115h1v1h-1zM642 144h1v1h-1zM642 173h1v1h-1zM642 203h1v1h-1zM642 232h1v1h-1zM642 261h1v1h-1zM642 290h1v1h-1zM642 320h1v1h-1zM642 349h1v1h-1zM642 378h1v1h-1zM642 408h1v1h-1zM642 437h1v1h-1zM642 466h1v1h-1zM642 495h1v1h-1zM642 525h1v1h-1zM642 554h1v1h-1zM642 583h1v1h-1zM642 613h1v1h-1zM642 642h1v1h-1zM642 671h1v1h-1zM642 700h1v1h-1zM642 730h1v1h-1zM671 115h1v1h-1zM671 144h1v1h-1zM671 173h1v1h-1zM671 203h1v1h-1zM671 232h1v1h-1zM671 261h1v1h-1zM671 290h1v1h-1zM671 320h1v1h-1zM671 349h1v1h-1zM671 378h1v1h-1zM671 408h1v1h-1zM671 437h1v1h-1zM671 466h1v1h-1zM671 495h1v1h-1zM671 525h1v1h-1zM671 554h1v1h-1zM671 583h1v1h-1zM671 613h1v1h-1zM671 642h1v1h-1zM671 671h1v1h-1zM671 700h1v1h-1zM671 730h1v1h-1zM700 115h1v1h-1zM700 144h1v1h-1zM700 173h1v1h-1zM700 203h1v1h-1zM700 232h1v1h-1zM700 261h1v1h-1zM700 290h1v1h-1zM700 320h1v1h-1zM700 349h1v1h-1zM700 378h1v1h-1zM700 408h1v1h-1zM700 437h1v1h-1zM700 466h1v1h-1zM700 495h1v1h-1zM700 525h1v1h-1zM700 554h1v1h-1zM700 583h1v1h-1zM700 613h1v1h-1zM700 642h1v1h-1zM700 671h1v1h-1zM700 700h1v1h-1zM700 730h1v1h-1zM730 115h1v1h-1zM730 144h1v1h-1zM730 173h1v1h-1zM730 203h1v1h-1zM730 232h1v1h-1zM730 261h1v1h-1zM730 290h1v1h-1zM730 320h1v1h-1zM730 349h1v1h-1zM730 378h1v1h-1zM730 408h1v1h-1zM730 437h1v1h-1zM730 466h1v1h-1zM730 495h1v1h-1zM730 525h1v1h-1zM730 554h1v1h-1zM730 583h1v1h-1zM730 613h1v1h-1zM730 642h1v1h-1zM730 671h1v1h-1zM730 700h1v1h-1zM730 730h1v1h-1zM759 115h1v1h-1zM759 144h1v1h-1zM759 173h1v1h-1zM759 203h1v1h-1zM759 232h1v1h-1zM759 261h1v1h-1zM759 290h1v1h-1zM759 320h1v1h-1zM759 349h1v1h-1zM759 378h1v1h-1zM759 408h1v1h-1zM759 437h1v1h-1zM759 466h1v1h-1zM759 495h1v1h-1zM759 525h1v1h-1zM759 554h1v1h-1zM759 583h1v1h-1zM759 613h1v1h-1zM759 642h1v1h-1zM759 671h1v1h-1zM759 700h1v1h-1zM759 730h1v1h-1zM788 115h1v1h-1zM788 144h1v1h-1zM788 173h1v1h-1zM788 203h1v1h-1zM788 232h1v1h-1zM788 261h1v1h-1zM788 290h1v1h-1zM788 320h1v1h-1zM788 349h1v1h-1zM788 378h1v1h-1zM788 408h1v1h-1zM788 437h1v1h-1zM788 466h1v1h-1zM788 495h1v1h-1zM788 525h1v1h-1zM788 554h1v1h-1zM788 583h1v1h-1zM788 613h1v1h-1zM788 642h1v1h-1zM788 671h1v1h-1zM788 700h1v1h-1zM788 730h1v1h-1zM818 115h1v1h-1zM818 144h1v1h-1zM818 173h1v1h-1zM818 203h1v1h-1zM818 232h1v1h-1zM818 261h1v1h-1zM818 290h1v1h-1zM818 320h1v1h-1zM818 349h1v1h-1zM818 378h1v1h-1zM818 408h1v1h-1zM818 437h1v1h-1zM818 466h1v1h-1zM818 495h1v1h-1zM818 525h1v1h-1zM818 554h1v1h-1zM818 583h1v1h-1zM818 613h1v1h-1zM818 642h1v1h-1zM818 671h1v1h-1zM818 700h1v1h-1zM818 730h1v1h-1zM847 115h1v1h-1zM847 144h1v1h-1zM847 173h1v1h-1zM847 203h1v1h-1zM847 232h1v1h-1zM847 261h1v1h-1zM847 290h1v1h-1zM847 320h1v1h-1zM847 349h1v1h-1zM847 378h1v1h-1zM847 408h1v1h-1zM847 437h1v1h-1zM847 466h1v1h-1zM847 495h1v1h-1zM847 525h1v1h-1zM847 554h1v1h-1zM847 583h1v1h-1zM847 613h1v1h-1zM847 642h1v1h-1zM847 671h1v1h-1zM847 700h1v1h-1zM847 730h1v1h-1zM876 115h1v1h-1zM876 144h1v1h-1zM876 173h1v1h-1zM876 203h1v1h-1zM876 232h1v1h-1zM876 261h1v1h-1zM876 290h1v1h-1zM876 320h1v1h-1zM876 349h1v1h-1zM876 378h1v1h-1zM876 408h1v1h-1zM876 437h1v1h-1zM876 466h1v1h-1zM876 495h1v1h-1zM876 525h1v1h-1zM876 554h1v1h-1zM876 583h1v1h-1zM876 613h1v1h-1zM876 642h1v1h-1zM876 671h1v1h-1zM876 700h1v1h-1zM876 730h1v1h-1zM906 115h1v1h-1zM906 144h1v1h-1zM906 173h1v1h-1zM906 203h1v1h-1zM906 232h1v1h-1zM906 261h1v1h-1zM906 290h1v1h-1zM906 320h1v1h-1zM906 349h1v1h-1zM906 378h1v1h-1zM906 408h1v1h-1zM906 437h1v1h-1zM906 466h1v1h-1zM906 495h1v1h-1zM906 525h1v1h-1zM906 554h1v1h-1zM906 583h1v1h-1zM906 613h1v1h-1zM906 642h1v1h-1zM906 671h1v1h-1zM906 700h1v1h-1zM906 730h1v1h-1zM935 115h1v1h-1zM935 144h1v1h-1zM935 173h1v1h-1zM935 203h1v1h-1zM935 232h1v1h-1zM935 261h1v1h-1zM935 290h1v1h-1zM935 320h1v1h-1zM935 349h1v1h-1zM935 378h1v1h-1zM935 408h1v1h-1zM935 437h1v1h-1zM935 466h1v1h-1zM935 495h1v1h-1zM935 525h1v1h-1zM935 554h1v1h-1zM935 583h1v1h-1zM935 613h1v1h-1zM935 642h1v1h-1zM935 671h1v1h-1zM935 700h1v1h-1zM935 730h1v1h-1zM964 115h1v1h-1zM964 144h1v1h-1zM964 173h1v1h-1zM964 203h1v1h-1zM964 232h1v1h-1zM964 261h1v1h-1zM964 290h1v1h-1zM964 320h1v1h-1zM964 349h1v1h-1zM964 378h1v1h-1zM964 408h1v1h-1zM964 437h1v1h-1zM964 466h1v1h-1zM964 495h1v1h-1zM964 525h1v1h-1zM964 554h1v1h-1zM964 583h1v1h-1zM964 613h1v1h-1zM964 642h1v1h-1zM964 671h1v1h-1zM964 700h1v1h-1zM964 730h1v1h-1zM993 115h1v1h-1zM993 144h1v1h-1zM993 173h1v1h-1zM993 203h1v1h-1zM993 232h1v1h-1zM993 261h1v1h-1zM993 290h1v1h-1zM993 320h1v1h-1zM993 349h1v1h-1zM993 378h1v1h-1zM993 408h1v1h-1zM993 437h1v1h-1zM993 466h1v1h-1zM993 495h1v1h-1zM993 525h1v1h-1zM993 554h1v1h-1zM993 583h1v1h-1zM993 613h1v1h-1zM993 642h1v1h-1zM993 671h1v1h-1zM993 700h1v1h-1zM993 730h1v1h-1zM1023 115h1v1h-1zM1023 144h1v1h-1zM1023 173h1v1h-1zM1023 203h1v1h-1zM1023 232h1v1h-1zM1023 261h1v1h-1zM1023 290h1v1h-1zM1023 320h1v1h-1zM1023 349h1v1h-1zM1023 378h1v1h-1zM1023 408h1v1h-1zM1023 437h1v1h-1zM1023 466h1v1h-1zM1023 495h1v1h-1zM1023 525h1v1h-1zM1023 554h1v1h-1zM1023 583h1v1h-1zM1023 613h1v1h-1zM1023 642h1v1h-1zM1023 671h1v1h-1zM1023 700h1v1h-1zM1023 730h1v1h-1zM1052 115h1v1h-1zM1052 144h1v1h-1zM1052 173h1v1h-1zM1052 203h1v1h-1zM1052 232h1v1h-1zM1052 261h1v1h-1zM1052 290h1v1h-1zM1052 320h1v1h-1zM1052 349h1v1h-1zM1052 378h1v1h-1zM1052 408h1v1h-1zM1052 437h1v1h-1zM1052 466h1v1h-1zM1052 495h1v1h-1zM1052 525h1v1h-1zM1052 554h1v1h-1zM1052 583h1v1h-1zM1052 613h1v1h-1zM1052 642h1v1h-1zM1052 671h1v1h-1zM1052 700h1v1h-1zM1052 730h1v1h-1zM1081 115h1v1h-1zM1081 144h1v1h-1zM1081 173h1v1h-1zM1081 203h1v1h-1zM1081 232h1v1h-1zM1081 261h1v1h-1zM1081 290h1v1h-1zM1081 320h1v1h-1zM1081 349h1v1h-1zM1081 378h1v1h-1zM1081 408h1v1h-1zM1081 437h1v1h-1zM1081 466h1v1h-1zM1081 495h1v1h-1zM1081 525h1v1h-1zM1081 554h1v1h-1zM1081 583h1v1h-1zM1081 613h1v1h-1zM1081 642h1v1h-1zM1081 671h1v1h-1zM1081 700h1v1h-1zM1081 730h1v1h-1zM1111 115h1v1h-1zM1111 144h1v1h-1zM1111 173h1v1h-1zM1111 203h1v1h-1zM1111 232h1v1h-1zM1111 261h1v1h-1zM1111 290h1v1h-1zM1111 320h1v1h-1zM1111 349h1v1h-1zM1111 378h1v1h-1zM1111 408h1v1h-1zM1111 437h1v1h-1zM1111 466h1v1h-1zM1111 495h1v1h-1zM1111 525h1v1h-1zM1111 554h1v1h-1zM1111 583h1v1h-1zM1111 613h1v1h-1zM1111 642h1v1h-1zM1111 671h1v1h-1zM1111 700h1v1h-1zM1111 730h1v1h-1zM1140 115h1v1h-1zM1140 144h1v1h-1zM1140 173h1v1h-1zM1140 203h1v1h-1zM1140 232h1v1h-1zM1140 261h1v1h-1zM1140 290h1v1h-1zM1140 320h1v1h-1zM1140 349h1v1h-1zM1140 378h1v1h-1zM1140 408h1v1h-1zM1140 437h1v1h-1zM1140 466h1v1h-1zM1140 495h1v1h-1zM1140 525h1v1h-1zM1140 554h1v1h-1zM1140 583h1v1h-1zM1140 613h1v1h-1zM1140 642h1v1h-1zM1140 671h1v1h-1zM1140 700h1v1h-1zM1140 730h1v1h-1zM1169 115h1v1h-1zM1169 144h1v1h-1zM1169 173h1v1h-1zM1169 203h1v1h-1zM1169 232h1v1h-1zM1169 261h1v1h-1zM1169 290h1v1h-1zM1169 320h1v1h-1zM1169 349h1v1h-1zM1169 378h1v1h-1zM1169 408h1v1h-1zM1169 437h1v1h-1zM1169 466h1v1h-1zM1169 495h1v1h-1zM1169 525h1v1h-1zM1169 554h1v1h-1zM1169 583h1v1h-1zM1169 613h1v1h-1zM1169 642h1v1h-1zM1169 671h1v1h-1zM1169 700h1v1h-1zM1169 730h1v1h-1zM1198 115h1v1h-1zM1198 144h1v1h-1zM1198 173h1v1h-1zM1198 203h1v1h-1zM1198 232h1v1h-1zM1198 261h1v1h-1zM1198 290h1v1h-1zM1198 320h1v1h-1zM1198 349h1v1h-1zM1198 378h1v1h-1zM1198 408h1v1h-1zM1198 437h1v1h-1zM1198 466h1v1h-1zM1198 495h1v1h-1zM1198 525h1v1h-1zM1198 554h1v1h-1zM1198 583h1v1h-1zM1198 613h1v1h-1zM1198 642h1v1h-1zM1198 671h1v1h-1zM1198 700h1v1h-1zM1198 730h1v1h-1zM1228 115h1v1h-1zM1228 144h1v1h-1zM1228 173h1v1h-1zM1228 203h1v1h-1zM1228 232h1v1h-1zM1228 261h1v1h-1zM1228 290h1v1h-1zM1228 320h1v1h-1zM1228 349h1v1h-1zM1228 378h1v1h-1zM1228 408h1v1h-1zM1228 437h1v1h-1zM1228 466h1v1h-1zM1228 495h1v1h-1zM1228 525h1v1h-1zM1228 554h1v1h-1zM1228 583h1v1h-1zM1228 613h1v1h-1zM1228 642h1v1h-1zM1228 671h1v1h-1zM1228 700h1v1h-1zM1228 730h1v1h-1zM1257 115h1v1h-1zM1257 144h1v1h-1zM1257 173h1v1h-1zM1257 203h1v1h-1zM1257 232h1v1h-1zM1257 261h1v1h-1zM1257 290h1v1h-1zM1257 320h1v1h-1zM1257 349h1v1h-1zM1257 378h1v1h-1zM1257 408h1v1h-1zM1257 437h1v1h-1zM1257 466h1v1h-1zM1257 495h1v1h-1zM1257 525h1v1h-1zM1257 554h1v1h-1zM1257 583h1v1h-1zM1257 613h1v1h-1zM1257 642h1v1h-1zM1257 671h1v1h-1zM1257 700h1v1h-1zM1257 730h1v1h-1z" fill="#1A1A1A"/>
<defs><clipPath id="cv"><rect x="111" y="115" width="1153" height="618.5"/></clipPath></defs>
<g clip-path="url(#cv)">
<rect x="365.5" y="131" width="116" height="57" fill="none" stroke="#0A0A90" stroke-width="2"/>
<text transform="translate(403.3,148) scale(0.8,1)" x="0" y="0" font-size="13" fill="#111" textLength="48.38" lengthAdjust="spacing">MUTIND</text>
<path d="M387 174 Q424 142 461 174" stroke="#0A0A90" stroke-width="2" fill="none"/><path d="M385.5 166 v9 h8 M462.5 166 v9 h-8" stroke="#0A0A90" stroke-width="2" fill="none"/>
<text transform="translate(390.3,213) scale(0.62,1)" x="0" y="0" font-size="18.5" fill="#5CA0DC" textLength="67.42" lengthAdjust="spacing">Mutual</text>
<text transform="translate(390.3,238) scale(0.62,1)" x="0" y="0" font-size="18.5" fill="#2C2CA6" textLength="7.26" lengthAdjust="spacing">k</text>
<text transform="translate(390.3,262) scale(0.62,1)" x="0" y="0" font-size="18.5" fill="#1A1A5E" textLength="84.68" lengthAdjust="spacing">K=.curve</text>
<text transform="translate(391,286.5) scale(0.62,1)" x="0" y="0" font-size="18.5" fill="#1A1A5E" textLength="33.06" lengthAdjust="spacing">M=</text>
<text transform="translate(390.3,311) scale(0.62,1)" x="0" y="0" font-size="18.5" fill="#1A1A5E" textLength="143.55" lengthAdjust="spacing">Inductor1= &quot;-&quot;</text>
<text transform="translate(390.3,335) scale(0.62,1)" x="0" y="0" font-size="18.5" fill="#1A1A5E" textLength="234.35" lengthAdjust="spacing">Inductor2= &quot;resistance&quot;</text>
<path d="M189.5 379.6 H220.5 L227.2 370.9 L235.5 387.7 L243.6 370.9 L252.1 387.7 L260.4 370.9 L268.7 387.7 L274.4 379.6 H306.5" stroke="#0A0A90" stroke-width="2.4" fill="none" stroke-linejoin="miter"/><path d="M192.4 383.3 L197.6 375.6" stroke="#0A0A90" stroke-width="1.6"/><rect x="186" y="377.0" width="6" height="5" fill="#3A5CD8"/><rect x="303.5" y="377.0" width="6" height="5" fill="#3A5CD8"/><text transform="translate(162.1,374) scale(0.62,1)" x="0" y="0" font-size="18.5" fill="#B42828" textLength="41.61" lengthAdjust="spacing">ohm</text><text transform="translate(306.4,374) scale(0.62,1)" x="0" y="0" font-size="18.5" fill="#B42828" textLength="93.23" lengthAdjust="spacing">maximum</text><text transform="translate(215.4,412.2) scale(0.62,1)" x="0" y="0" font-size="18.5" fill="#5CA0DC" textLength="13.71" lengthAdjust="spacing">R</text><text transform="translate(213.3,436) scale(0.62,1)" x="0" y="0" font-size="18.5" fill="#2C2CA6" textLength="48.39" lengthAdjust="spacing">rmax</text><text transform="translate(215.4,460.7) scale(0.62,1)" x="0" y="0" font-size="18.5" fill="#1A1A5E" textLength="61.94" lengthAdjust="spacing">R=r.f.</text>
<path d="M585.0 379.6 H616.0 L622.7 370.9 L631.0 387.7 L639.1 370.9 L647.6 387.7 L655.9 370.9 L664.2 387.7 L669.9 379.6 H702.0" stroke="#0A0A90" stroke-width="2.4" fill="none" stroke-linejoin="miter"/><path d="M587.9 383.3 L593.1 375.6" stroke="#0A0A90" stroke-width="1.6"/><rect x="581.5" y="377.0" width="6" height="5" fill="#3A5CD8"/><rect x="699.0" y="377.0" width="6" height="5" fill="#3A5CD8"/><text transform="translate(557.6,374) scale(0.62,1)" x="0" y="0" font-size="18.5" fill="#B42828" textLength="41.61" lengthAdjust="spacing">ohm</text><text transform="translate(701.9,374) scale(0.62,1)" x="0" y="0" font-size="18.5" fill="#B42828" textLength="88.71" lengthAdjust="spacing">minimum</text><text transform="translate(610.9,412.2) scale(0.62,1)" x="0" y="0" font-size="18.5" fill="#5CA0DC" textLength="13.71" lengthAdjust="spacing">R</text><text transform="translate(608.8,436) scale(0.62,1)" x="0" y="0" font-size="18.5" fill="#2C2CA6" textLength="41.94" lengthAdjust="spacing">rmin</text><text transform="translate(610.9,460.7) scale(0.62,1)" x="0" y="0" font-size="18.5" fill="#1A1A5E" textLength="61.94" lengthAdjust="spacing">R=r.f.</text>
<path d="M292 466.5 V503 M292 548 V583.5" stroke="#0A0A90" stroke-width="2"/>
<circle cx="291.5" cy="525.3" r="22" fill="none" stroke="#0A0A90" stroke-width="2.3"/>
<path d="M292 510 V528" stroke="#0A0A90" stroke-width="2"/><path d="M285.3 526 H299 L292 542 Z" fill="#0A0A90"/>
<path d="M287 476 L297 471" stroke="#0A0A90" stroke-width="1.5"/>
<rect x="289" y="464.0" width="6" height="5" fill="#3A5CD8"/><rect x="289" y="581.0" width="6" height="5" fill="#3A5CD8"/>
<text transform="translate(291.8,460.5) scale(0.62,1)" x="0" y="0" font-size="18.5" fill="#B42828" textLength="12.10" lengthAdjust="spacing">a</text>
<text transform="translate(292.7,579) scale(0.62,1)" x="0" y="0" font-size="18.5" fill="#B42828" textLength="51.61" lengthAdjust="spacing">diode</text>
<text transform="translate(323.6,482) scale(0.62,1)" x="0" y="0" font-size="18.5" fill="#5CA0DC" textLength="91.94" lengthAdjust="spacing">ItUserDef</text>
<text transform="translate(323.6,505.7) scale(0.62,1)" x="0" y="0" font-size="18.5" fill="#2C2CA6" textLength="14.52" lengthAdjust="spacing">is</text>
<text transform="translate(323.6,530.8) scale(0.62,1)" x="0" y="0" font-size="18.5" fill="#1A1A5E" textLength="82.26" lengthAdjust="spacing">I_Tran=</text>
<path d="M848 350 H880 A9 9.5 0 0 1 898 350 A9 9.5 0 0 1 916 350 A9 9.5 0 0 1 934 350 H965" stroke="#0A0A90" stroke-width="2" fill="none"/>
<circle cx="875" cy="342.5" r="2.8" fill="none" stroke="#0A0A90" stroke-width="1.5"/>
<path d="M851 354 L855 346" stroke="#0A0A90" stroke-width="1.5"/>
<rect x="845" y="347.5" width="6" height="5" fill="#3A5CD8"/><rect x="962" y="347.5" width="6" height="5" fill="#3A5CD8"/>
<text transform="translate(832.2,344.5) scale(0.62,1)" x="0" y="0" font-size="18.5" fill="#B42828" textLength="22.58" lengthAdjust="spacing">nh</text>
<text transform="translate(965.3,344.5) scale(0.62,1)" x="0" y="0" font-size="18.5" fill="#B42828" textLength="103.71" lengthAdjust="spacing">connection</text>
<text transform="translate(872.5,379) scale(0.62,1)" x="0" y="0" font-size="18.5" fill="#5CA0DC" textLength="11.29" lengthAdjust="spacing">L</text>
<text transform="translate(872.5,402.5) scale(0.62,1)" x="0" y="0" font-size="18.5" fill="#2C2CA6" textLength="4.03" lengthAdjust="spacing">l</text>
<text transform="translate(872.5,427) scale(0.62,1)" x="0" y="0" font-size="18.5" fill="#1A1A5E" textLength="137.58" lengthAdjust="spacing">L=inductance</text>
<text transform="translate(872.5,451.3) scale(0.62,1)" x="0" y="0" font-size="18.5" fill="#1A1A5E" textLength="30.32" lengthAdjust="spacing">R=</text>
<path d="M702 525.8 H752 M767 525.8 H819 M767 510 V541.5" stroke="#0A0A90" stroke-width="2" fill="none"/>
<path d="M746.5 510.5 Q758 525.8 746.5 541" stroke="#0A0A90" stroke-width="2" fill="none"/>
<path d="M706 530 L711 522" stroke="#0A0A90" stroke-width="1.5"/>
<rect x="699" y="523.3" width="6" height="5" fill="#3A5CD8"/><rect x="816" y="523.3" width="6" height="5" fill="#3A5CD8"/>
<text transform="translate(689.3,523.3) scale(0.62,1)" x="0" y="0" font-size="18.5" fill="#B42828" textLength="19.68" lengthAdjust="spacing">pf</text>
<text transform="translate(819.6,521) scale(0.62,1)" x="0" y="0" font-size="18.5" fill="#B42828" textLength="52.26" lengthAdjust="spacing">diode</text>
<text transform="translate(726.4,565) scale(0.62,1)" x="0" y="0" font-size="18.5" fill="#5CA0DC" textLength="14.52" lengthAdjust="spacing">C</text>
<text transform="translate(726.4,589) scale(0.62,1)" x="0" y="0" font-size="18.5" fill="#2C2CA6" textLength="11.29" lengthAdjust="spacing">c</text>
<text transform="translate(726.4,614) scale(0.62,1)" x="0" y="0" font-size="18.5" fill="#1A1A5E" textLength="150.32" lengthAdjust="spacing">C=capacitance.</text>
<path d="M438 554.6 H467.5 M526.5 554.6 H555.7" stroke="#0A0A90" stroke-width="2"/>
<rect x="467.5" y="541" width="59" height="29" fill="none" stroke="#0A0A90" stroke-width="2"/>
<path d="M441 559 L446 551" stroke="#0A0A90" stroke-width="1.5"/>
<rect x="435" y="552.1" width="6" height="5" fill="#3A5CD8"/><rect x="552.7" y="552.1" width="6" height="5" fill="#3A5CD8"/>
<text transform="translate(411.1,550.5) scale(0.62,1)" x="0" y="0" font-size="18.5" fill="#B42828" textLength="44.52" lengthAdjust="spacing">nsec</text>
<text transform="translate(555.7,550.5) scale(0.62,1)" x="0" y="0" font-size="18.5" fill="#B42828" textLength="68.23" lengthAdjust="spacing">time_n</text>
<path d="M438 613.7 H555" stroke="#0A0A90" stroke-width="2"/><path d="M558 613.7 H565.5" stroke="#B42828" stroke-width="1.2"/>
<rect x="435" y="611.2" width="6" height="5" fill="#3A5CD8"/><rect x="552" y="611.2" width="6" height="5" fill="#3A5CD8"/>
<text transform="translate(400.7,609) scale(0.62,1)" x="0" y="0" font-size="18.5" fill="#B42828" textLength="59.84" lengthAdjust="spacing">transit</text>
<text transform="translate(462.1,638.1) scale(0.62,1)" x="0" y="0" font-size="18.5" fill="#5CA0DC" textLength="58.23" lengthAdjust="spacing">TLIN4</text>
<text transform="translate(462.1,662) scale(0.62,1)" x="0" y="0" font-size="18.5" fill="#2C2CA6" textLength="13.71" lengthAdjust="spacing">tt</text>
<text transform="translate(462.1,686.2) scale(0.62,1)" x="0" y="0" font-size="18.5" fill="#1A1A5E" textLength="131.13" lengthAdjust="spacing">Z=50.0 Ohm</text>
<text transform="translate(462.1,710.6) scale(0.62,1)" x="0" y="0" font-size="18.5" fill="#1A1A5E" textLength="59.35" lengthAdjust="spacing">E=90</text>
<text transform="translate(462.1,735) scale(0.62,1)" x="0" y="0" font-size="18.5" fill="#1A1A5E" textLength="90.32" lengthAdjust="spacing">F=1 GHz</text>
</g>
<text x="4.4" y="765" font-size="11" fill="#000" font-weight="normal" textLength="147.5" lengthAdjust="spacingAndGlyphs" text-anchor="start" style="" >Select: Enter the starting point</text>
<rect x="741" y="753" width="1" height="15" fill="#C8C4B0"/><rect x="742" y="753" width="1" height="15" fill="#FFFFFF"/>
<rect x="855" y="753" width="1" height="15" fill="#C8C4B0"/><rect x="856" y="753" width="1" height="15" fill="#FFFFFF"/>
<rect x="920" y="753" width="1" height="15" fill="#C8C4B0"/><rect x="921" y="753" width="1" height="15" fill="#FFFFFF"/>
<rect x="1026" y="753" width="1" height="15" fill="#C8C4B0"/><rect x="1027" y="753" width="1" height="15" fill="#FFFFFF"/>
<rect x="1134" y="753" width="1" height="15" fill="#C8C4B0"/><rect x="1135" y="753" width="1" height="15" fill="#FFFFFF"/>
<rect x="1164" y="753" width="1" height="15" fill="#C8C4B0"/><rect x="1165" y="753" width="1" height="15" fill="#FFFFFF"/>
<rect x="1201" y="753" width="1" height="15" fill="#C8C4B0"/><rect x="1202" y="753" width="1" height="15" fill="#FFFFFF"/>
<rect x="1279" y="753" width="1" height="15" fill="#C8C4B0"/><rect x="1280" y="753" width="1" height="15" fill="#FFFFFF"/>
<text x="748" y="765" font-size="11" fill="#000" font-weight="normal" textLength="38" lengthAdjust="spacingAndGlyphs" text-anchor="start" style="" >0 items</text>
<text x="862.7" y="765" font-size="11" fill="#A0287A" font-weight="normal" textLength="21" lengthAdjust="spacingAndGlyphs" text-anchor="start" style="" >wire</text>
<text x="927.5" y="765" font-size="11" fill="#000" font-weight="normal" textLength="72" lengthAdjust="spacingAndGlyphs" text-anchor="start" style="" >6.3750, -2.8750</text>
<text x="1033.7" y="765" font-size="11" fill="#000" font-weight="normal" textLength="75" lengthAdjust="spacingAndGlyphs" text-anchor="start" style="" >0.0000, 0.0000</text>
<text x="1141.3" y="765" font-size="11" fill="#000" font-weight="normal" textLength="8.5" lengthAdjust="spacingAndGlyphs" text-anchor="start" style="" >in</text>
<text x="1171" y="765" font-size="11" fill="#000" font-weight="normal" textLength="24" lengthAdjust="spacingAndGlyphs" text-anchor="start" style="" >A/RF</text>
<text x="1208.7" y="765" font-size="11" fill="#000" font-weight="normal" textLength="46.5" lengthAdjust="spacingAndGlyphs" text-anchor="start" style="" >SimSchem</text>
<text x="36" y="792" font-size="17" font-weight="bold" font-style="italic" fill="#1A4A1A" textLength="37" lengthAdjust="spacingAndGlyphs">start</text><text x="35" y="791" font-size="17" font-weight="bold" font-style="italic" fill="#fff" textLength="37" lengthAdjust="spacingAndGlyphs">start</text>
<path d="M12 776 q4 -2 8 0 v6 q-4 -2 -8 0 z" fill="#F05A22"/><path d="M21 776 q4 2 8 0 v6 q-4 2 -8 0 z" fill="#7AB928"/><path d="M11 783 q4 -2 8 0 v6 q-4 -2 -8 0 z" fill="#32A0E8"/><path d="M20 783 q4 2 8 0 v6 q-4 2 -8 0 z" fill="#F8C010"/>
<path d="M111 779 h9 l3 3 v9 h-12 z" fill="#F4F8FF" stroke="#1A3A90" stroke-width="1.2"/><path d="M113 783 h6 v5 h-6 z" fill="none" stroke="#4060A0"/><path d="M116 786 l6 -6 M120 780 h3 v3" stroke="#202840" stroke-width="1.3" fill="none"/>
<text x="132" y="791" font-size="20" font-weight="bold" fill="#2A90E0" textLength="15" lengthAdjust="spacingAndGlyphs">e</text><path d="M132 791 q2 -12 16 -12" stroke="#E8A820" stroke-width="1.6" fill="none"/>
<circle cx="163.5" cy="784" r="7" fill="#E03A2A"/><path d="M163.5 784 L170.5 784 A7 7 0 0 1 160 790 Z" fill="#F0C020"/><path d="M163.5 784 L160 790 A7 7 0 0 1 157 780.5 Z" fill="#30A040"/><circle cx="163.5" cy="784" r="3" fill="#2A70D8" stroke="#fff" stroke-width="1.2"/>
<defs><linearGradient id="tb182" x1="0" y1="0" x2="0" y2="1"><stop offset="0" stop-color="#5A9AF8"/><stop offset="0.15" stop-color="#3C82F2"/><stop offset="0.85" stop-color="#3779EC"/><stop offset="1" stop-color="#2C66D6"/></linearGradient></defs>
<rect x="182" y="774" width="122" height="24" rx="3" fill="url(#tb182)"/><rect x="182" y="774" width="1" height="24" fill="#2A5FC8"/>
<path d="M194 777 h14 v4 l-2 2 h-10 l-2 -2 z" fill="#2A9A3A"/><rect x="196" y="782" width="10" height="9" fill="#3A4A70"/><rect x="197" y="783" width="8" height="7" fill="#F8F8FF"/><rect x="198" y="784" width="2" height="2" fill="#202040"/><rect x="201" y="786" width="3" height="2" fill="#202040"/>
<text x="211" y="789" font-size="11" fill="#FFFFFF" font-weight="normal" textLength="74.6" lengthAdjust="spacingAndGlyphs" text-anchor="start" style="" >Advanced De...</text>
<defs><linearGradient id="tb306" x1="0" y1="0" x2="0" y2="1"><stop offset="0" stop-color="#5A9AF8"/><stop offset="0.15" stop-color="#3C82F2"/><stop offset="0.85" stop-color="#3779EC"/><stop offset="1" stop-color="#2C66D6"/></linearGradient></defs>
<rect x="306" y="774" width="122" height="24" rx="3" fill="url(#tb306)"/><rect x="306" y="774" width="1" height="24" fill="#2A5FC8"/>
<path d="M318 777 h14 v4 l-2 2 h-10 l-2 -2 z" fill="#2A9A3A"/><rect x="320" y="782" width="10" height="9" fill="#3A4A70"/><rect x="321" y="783" width="8" height="7" fill="#F8F8FF"/><rect x="322" y="784" width="2" height="2" fill="#202040"/><rect x="325" y="786" width="3" height="2" fill="#202040"/>
<text x="335" y="789" font-size="11" fill="#FFFFFF" font-weight="normal" textLength="76.7" lengthAdjust="spacingAndGlyphs" text-anchor="start" style="" >Component Li...</text>
<defs><linearGradient id="tb430" x1="0" y1="0" x2="0" y2="1"><stop offset="0" stop-color="#5A9AF8"/><stop offset="0.15" stop-color="#3C82F2"/><stop offset="0.85" stop-color="#3779EC"/><stop offset="1" stop-color="#2C66D6"/></linearGradient></defs>
<rect x="430" y="774" width="122" height="24" rx="3" fill="url(#tb430)"/><rect x="430" y="774" width="1" height="24" fill="#2A5FC8"/>
<path d="M442 777 h14 v4 l-2 2 h-10 l-2 -2 z" fill="#2A9A3A"/><rect x="444" y="782" width="10" height="9" fill="#3A4A70"/><rect x="445" y="783" width="8" height="7" fill="#F8F8FF"/><rect x="446" y="784" width="2" height="2" fill="#202040"/><rect x="449" y="786" width="3" height="2" fill="#202040"/>
<text x="459" y="789" font-size="11" fill="#FFFFFF" font-weight="normal" textLength="78" lengthAdjust="spacingAndGlyphs" text-anchor="start" style="" >[ project_prj ]...</text>
<rect x="553" y="774" width="123" height="24" rx="3" fill="#1E50C0"/><rect x="553" y="774" width="123" height="2" rx="1" fill="#1A44A8"/>
<path d="M565 777 h14 v4 l-2 2 h-10 l-2 -2 z" fill="#2A9A3A"/><rect x="567" y="782" width="10" height="9" fill="#3A4A70"/><rect x="568" y="783" width="8" height="7" fill="#F8F8FF"/><rect x="569" y="784" width="2" height="2" fill="#202040"/><rect x="572" y="786" width="3" height="2" fill="#202040"/>
<text x="583" y="789" font-size="11" fill="#FFFFFF" font-weight="normal" textLength="78" lengthAdjust="spacingAndGlyphs" text-anchor="start" style="" >[ project_prj ]...</text>
<defs><linearGradient id="tb678" x1="0" y1="0" x2="0" y2="1"><stop offset="0" stop-color="#5A9AF8"/><stop offset="0.15" stop-color="#3C82F2"/><stop offset="0.85" stop-color="#3779EC"/><stop offset="1" stop-color="#2C66D6"/></linearGradient></defs>
<rect x="678" y="774" width="122" height="24" rx="3" fill="url(#tb678)"/><rect x="678" y="774" width="1" height="24" fill="#2A5FC8"/>
<circle cx="696" cy="785" r="7" fill="#E03A2A"/><path d="M696 785 L703 785 A7 7 0 0 1 692.5 791 Z" fill="#F0C020"/><path d="M696 785 L692.5 791 A7 7 0 0 1 689.5 781.5 Z" fill="#30A040"/><circle cx="696" cy="785" r="3" fill="#2A70D8" stroke="#fff" stroke-width="1.2"/>
<text x="707" y="789" font-size="11" fill="#FFFFFF" font-weight="normal" textLength="74.4" lengthAdjust="spacingAndGlyphs" text-anchor="start" style="" >model of PIN ...</text>
<defs><linearGradient id="tb802" x1="0" y1="0" x2="0" y2="1"><stop offset="0" stop-color="#5A9AF8"/><stop offset="0.15" stop-color="#3C82F2"/><stop offset="0.85" stop-color="#3779EC"/><stop offset="1" stop-color="#2C66D6"/></linearGradient></defs>
<rect x="802" y="774" width="122" height="24" rx="3" fill="url(#tb802)"/><rect x="802" y="774" width="1" height="24" fill="#2A5FC8"/>
<path d="M814 778 h10 l3 3 v12 h-13 z" fill="#fff" stroke="#B02020"/><rect x="813" y="778" width="9" height="5" fill="#D02020"/><path d="M817 791 q2 -8 4 -1 q-4 -2 -6 1" stroke="#D02020" fill="none"/>
<text x="831" y="789" font-size="11" fill="#FFFFFF" font-weight="normal" textLength="78" lengthAdjust="spacingAndGlyphs" text-anchor="start" style="" >AN10173.pdf ...</text>
<defs><linearGradient id="tb926" x1="0" y1="0" x2="0" y2="1"><stop offset="0" stop-color="#5A9AF8"/><stop offset="0.15" stop-color="#3C82F2"/><stop offset="0.85" stop-color="#3779EC"/><stop offset="1" stop-color="#2C66D6"/></linearGradient></defs>
<rect x="926" y="774" width="122" height="24" rx="3" fill="url(#tb926)"/><rect x="926" y="774" width="1" height="24" fill="#2A5FC8"/>
<path d="M938 778 h10 l3 3 v12 h-13 z" fill="#fff" stroke="#B02020"/><rect x="937" y="778" width="9" height="5" fill="#D02020"/><path d="M941 791 q2 -8 4 -1 q-4 -2 -6 1" stroke="#D02020" fill="none"/>
<text x="955" y="789" font-size="11" fill="#FFFFFF" font-weight="normal" textLength="79.7" lengthAdjust="spacingAndGlyphs" text-anchor="start" style="" >9708-1_2036....</text>
<defs><linearGradient id="tb1050" x1="0" y1="0" x2="0" y2="1"><stop offset="0" stop-color="#5A9AF8"/><stop offset="0.15" stop-color="#3C82F2"/><stop offset="0.85" stop-color="#3779EC"/><stop offset="1" stop-color="#2C66D6"/></linearGradient></defs>
<rect x="1050" y="774" width="122" height="24" rx="3" fill="url(#tb1050)"/><rect x="1050" y="774" width="1" height="24" fill="#2A5FC8"/>
<path d="M1061 779 h6 l2 2 h8 v11 h-16 z" fill="#F0D060" stroke="#B08820"/><path d="M1061 784 h16 v8 h-16 z" fill="#F8E088"/>
<text x="1079" y="789" font-size="11" fill="#FFFFFF" font-weight="normal" textLength="51.7" lengthAdjust="spacingAndGlyphs" text-anchor="start" style="" >Downloads</text>
<circle cx="1187.5" cy="785" r="8.5" fill="#2A7EEA" stroke="#8EC0F8" stroke-width="1"/><path d="M1189.5 780.5 l-4 4.5 l4 4.5" stroke="#fff" stroke-width="2.2" fill="none"/>
<rect x="1199" y="778" width="8" height="9" fill="#D8E4F4" stroke="#667" stroke-width="0.8"/><rect x="1198" y="788" width="10" height="3" fill="#B8C0D0"/><path d="M1209 779 q2 3 0 6 M1211.5 777 q3 5 0 10 M1214 776 q4 6 0 12" stroke="#30D030" stroke-width="1.3" fill="none"/>
<text x="1223" y="789" font-size="11" fill="#FFFFFF" font-weight="normal" textLength="39" lengthAdjust="spacingAndGlyphs" text-anchor="start" style="" >4:08 PM</text>
</svg>
</body></html>
